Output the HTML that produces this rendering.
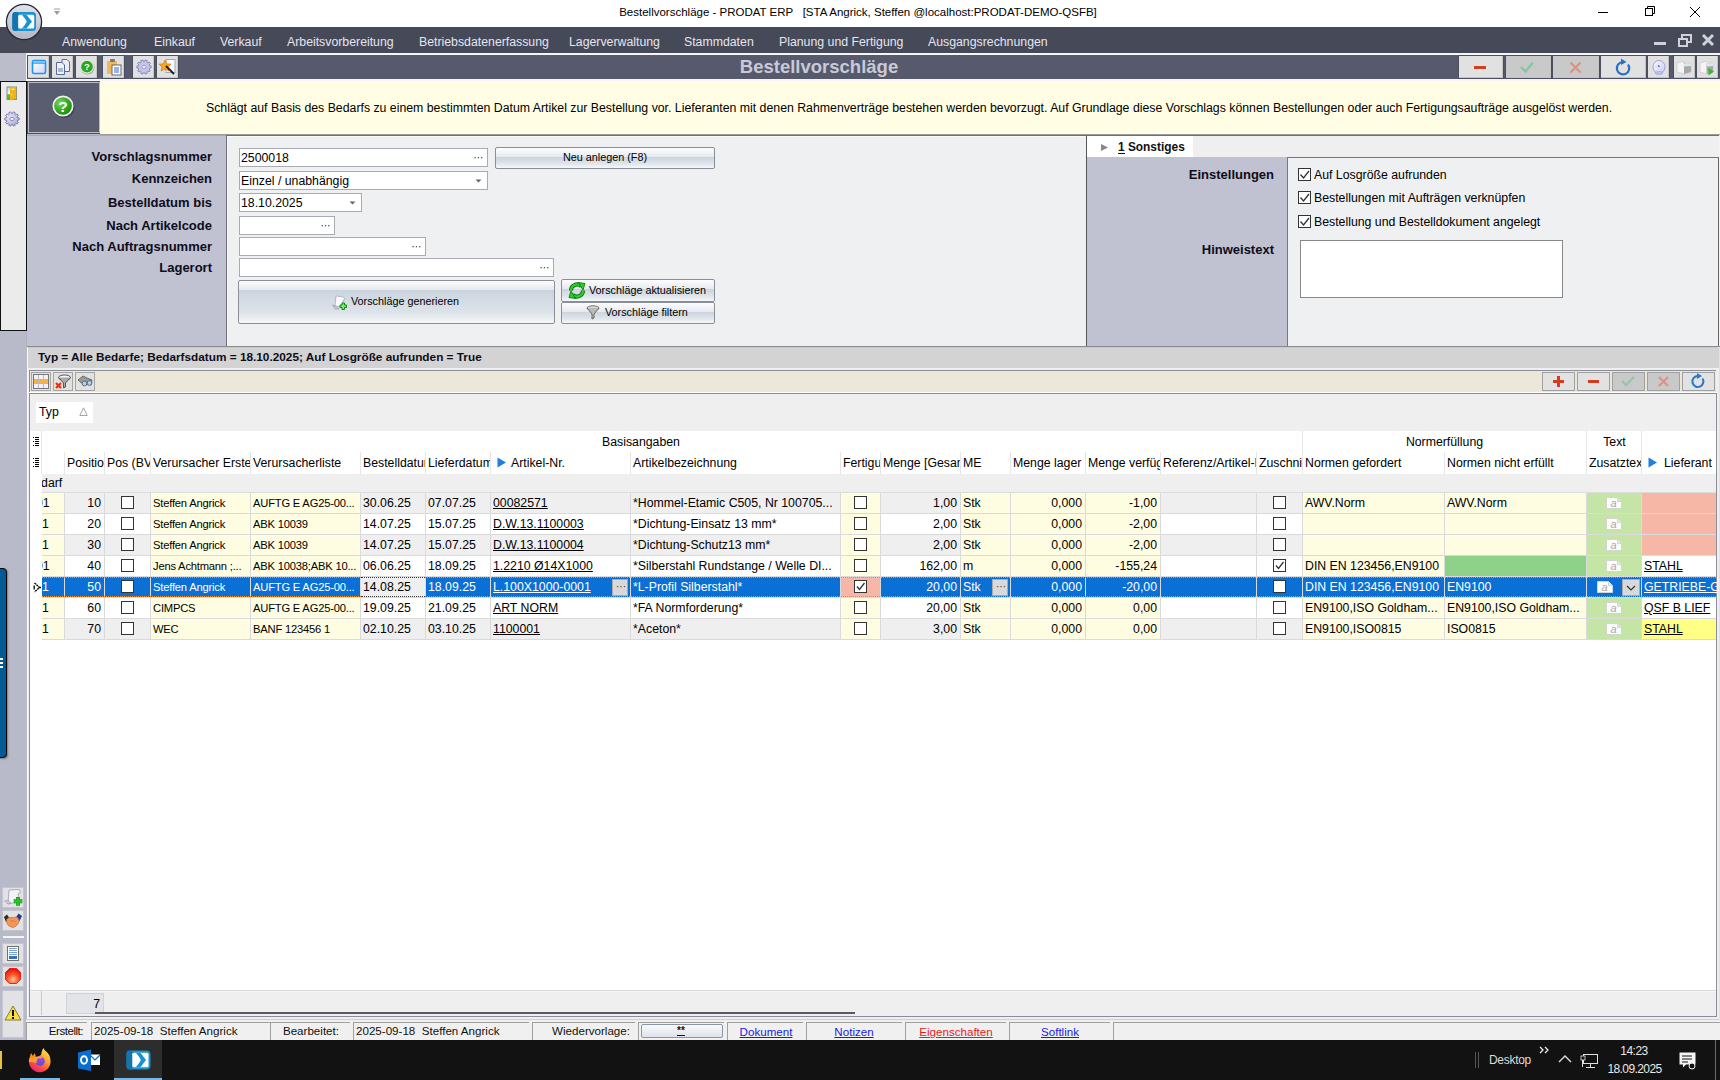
<!DOCTYPE html><html><head><meta charset="utf-8"><style>
*{margin:0;padding:0;box-sizing:border-box}
html,body{width:1720px;height:1080px;overflow:hidden}
body{position:relative;background:#b9bac9;font-family:"Liberation Sans",sans-serif;color:#000}
div{position:absolute}
.t{white-space:nowrap}
.u{text-decoration:underline}
.cb{width:13px;height:13px;background:#fff;border:1px solid #333}
.tb{background:#d9d9d9;border:1px solid #8d8f99}
</style></head><body><div style="left:0px;top:0px;width:1720px;height:27px;background:#fff"></div>
<div class="t" style="left:458px;top:6.77px;font-size:11.5px;line-height:11.5px;width:800px;text-align:center;color:#000;">Bestellvorschläge - PRODAT ERP &nbsp; [STA Angrick, Steffen @localhost:PRODAT-DEMO-QSFB]</div>
<svg style="position:absolute;left:1590px;top:4px" width="130" height="18" viewBox="0 0 130 18"><line x1="8" y1="8.5" x2="18" y2="8.5" stroke="#000" stroke-width="1"/><rect x="55.5" y="4.5" width="7" height="7" fill="none" stroke="#000"/><polyline points="57.5,4.5 57.5,2.5 64.5,2.5 64.5,9.5 62.5,9.5" fill="none" stroke="#000"/><line x1="100" y1="3" x2="110" y2="13" stroke="#000"/><line x1="110" y1="3" x2="100" y2="13" stroke="#000"/></svg>
<svg style="position:absolute;left:52px;top:7px" width="10" height="10" viewBox="0 0 10 10"><line x1="2" y1="2" x2="8" y2="2" stroke="#9a9ab0"/><polygon points="2,4 8,4 5,8" fill="#9a9ab0"/></svg>
<div style="left:0px;top:27px;width:1720px;height:26px;background:#464958"></div>
<div class="t" style="left:62px;top:35.89px;font-size:12.3px;line-height:12.3px;color:#e4e5ee;">Anwendung</div>
<div class="t" style="left:154px;top:35.89px;font-size:12.3px;line-height:12.3px;color:#e4e5ee;">Einkauf</div>
<div class="t" style="left:220px;top:35.89px;font-size:12.3px;line-height:12.3px;color:#e4e5ee;">Verkauf</div>
<div class="t" style="left:287px;top:35.89px;font-size:12.3px;line-height:12.3px;color:#e4e5ee;">Arbeitsvorbereitung</div>
<div class="t" style="left:419px;top:35.89px;font-size:12.3px;line-height:12.3px;color:#e4e5ee;">Betriebsdatenerfassung</div>
<div class="t" style="left:569px;top:35.89px;font-size:12.3px;line-height:12.3px;color:#e4e5ee;">Lagerverwaltung</div>
<div class="t" style="left:684px;top:35.89px;font-size:12.3px;line-height:12.3px;color:#e4e5ee;">Stammdaten</div>
<div class="t" style="left:779px;top:35.89px;font-size:12.3px;line-height:12.3px;color:#e4e5ee;">Planung und Fertigung</div>
<div class="t" style="left:928px;top:35.89px;font-size:12.3px;line-height:12.3px;color:#e4e5ee;">Ausgangsrechnungen</div>
<svg style="position:absolute;left:1648px;top:32px" width="72" height="18" viewBox="0 0 72 18"><rect x="6" y="10" width="12" height="3" fill="#d0d1db"/><rect x="31" y="7" width="8" height="7" fill="none" stroke="#d0d1db" stroke-width="2"/><polyline points="34,6 34,3 43,3 43,10 40,10" fill="none" stroke="#d0d1db" stroke-width="2"/><path d="M55 3 L65 13 M65 3 L55 13" stroke="#d0d1db" stroke-width="3"/></svg>
<svg style="position:absolute;left:0;top:0" width="50" height="45" viewBox="0 0 50 45"><defs><linearGradient id="lg" x1="0" y1="0" x2="0" y2="1"><stop offset="0" stop-color="#e2e3ea"/><stop offset="1" stop-color="#b4b5c4"/></linearGradient></defs><circle cx="24" cy="22" r="17.6" fill="url(#lg)" stroke="#262833" stroke-width="1.3"/><rect x="12.3" y="12" width="23.7" height="19" rx="3.5" fill="#1b93d0"/><rect x="12.3" y="12" width="6" height="19" rx="3" fill="#1474ad"/><rect x="18.2" y="14.7" width="16" height="13.8" rx="1.5" fill="#fff"/><path d="M21.8 14.7 L26.5 14.7 Q29.5 18.5 32 21.6 Q29.5 24.7 26.5 28.5 L21.8 28.5 Q25.5 24.7 26.8 21.6 Q25.5 18.5 21.8 14.7 Z" fill="#1b93d0"/></svg>
<div style="left:0px;top:53px;width:1720px;height:28px;background:#f6f6f8"></div>
<div style="left:0px;top:53px;width:26px;height:28px;background:#bcbdcb"></div>
<div style="left:27px;top:55px;width:1693px;height:24px;background:#575a6c"></div>
<div style="left:27px;top:55px;width:23px;height:24px;background:#e1e1e1;border:1px solid #4c4f60;box-shadow:inset -1px -1px 0 #c8c8c8"></div>
<div style="left:51px;top:55px;width:23px;height:24px;background:#e1e1e1;border:1px solid #4c4f60;box-shadow:inset -1px -1px 0 #c8c8c8"></div>
<div style="left:75px;top:55px;width:23px;height:24px;background:#e1e1e1;border:1px solid #4c4f60;box-shadow:inset -1px -1px 0 #c8c8c8"></div>
<div style="left:102px;top:55px;width:23px;height:24px;background:#e1e1e1;border:1px solid #4c4f60;box-shadow:inset -1px -1px 0 #c8c8c8"></div>
<div style="left:132px;top:55px;width:23px;height:24px;background:#e1e1e1;border:1px solid #4c4f60;box-shadow:inset -1px -1px 0 #c8c8c8"></div>
<div style="left:156px;top:55px;width:23px;height:24px;background:#e1e1e1;border:1px solid #4c4f60;box-shadow:inset -1px -1px 0 #c8c8c8"></div>
<div class="t" style="left:419px;top:57.84px;font-size:18.5px;line-height:18.5px;width:800px;text-align:center;font-weight:700;color:#c8cad8;">Bestellvorschläge</div>
<div style="left:1458px;top:55px;width:46px;height:24px;background:#e1e1e1;border:1px solid #4c4f60;box-shadow:inset -1px -1px 0 #c4c4c4"></div>
<div style="left:1505px;top:55px;width:47px;height:24px;background:#c9c9c9;border:1px solid #4c4f60;box-shadow:inset -1px -1px 0 #c4c4c4"></div>
<div style="left:1552px;top:55px;width:48px;height:24px;background:#c9c9c9;border:1px solid #4c4f60;box-shadow:inset -1px -1px 0 #c4c4c4"></div>
<div style="left:1600px;top:55px;width:47px;height:24px;background:#e1e1e1;border:1px solid #4c4f60;box-shadow:inset -1px -1px 0 #c4c4c4"></div>
<div style="left:1647px;top:55px;width:23px;height:24px;background:#e1e1e1;border:1px solid #4c4f60;box-shadow:inset -1px -1px 0 #c4c4c4"></div>
<div style="left:1673px;top:55px;width:23px;height:24px;background:#e1e1e1;border:1px solid #4c4f60;box-shadow:inset -1px -1px 0 #c4c4c4"></div>
<div style="left:1696px;top:55px;width:23px;height:24px;background:#e1e1e1;border:1px solid #4c4f60;box-shadow:inset -1px -1px 0 #c4c4c4"></div>
<div style="left:0px;top:81px;width:27px;height:250px;background:#ebebeb;border:1px solid #111"></div>
<div style="left:26px;top:331px;width:1px;height:16px;background:#b0b1c0"></div>
<div style="left:27px;top:81px;width:74px;height:53px;background:#5a5d6f;border:1px solid #4c4f60;box-shadow:inset 0 0 0 1px #b8bac8"></div>
<div style="left:100px;top:81px;width:1620px;height:54px;background:#fffde4;border-bottom:1px solid #9a9a9a"></div>
<div class="t" style="left:206px;top:101.59px;font-size:12.3px;line-height:12.3px;">Schlägt auf Basis des Bedarfs zu einem bestimmten Datum Artikel zur Bestellung vor. Lieferanten mit denen Rahmenverträge bestehen werden bevorzugt. Auf Grundlage diese Vorschlags können Bestellungen oder auch Fertigungsaufträge ausgelöst werden.</div>
<div style="left:27px;top:135px;width:200px;height:212px;background:#c0c1d1;box-shadow:inset 0 1px 0 #a8a9b8"></div>
<div style="left:226px;top:135px;width:861px;height:212px;background:#eff0f2;border-left:1px solid #6e6f78;border-top:1px solid #6e6f78;box-shadow:inset 1px 1px 0 #fafafa"></div>
<div class="t" style="left:-388px;top:150.00px;font-size:13px;line-height:13px;width:600px;text-align:right;font-weight:700;color:#0d0d1a;">Vorschlagsnummer</div>
<div class="t" style="left:-388px;top:172.00px;font-size:13px;line-height:13px;width:600px;text-align:right;font-weight:700;color:#0d0d1a;">Kennzeichen</div>
<div class="t" style="left:-388px;top:196.00px;font-size:13px;line-height:13px;width:600px;text-align:right;font-weight:700;color:#0d0d1a;">Bestelldatum bis</div>
<div class="t" style="left:-388px;top:219.00px;font-size:13px;line-height:13px;width:600px;text-align:right;font-weight:700;color:#0d0d1a;">Nach Artikelcode</div>
<div class="t" style="left:-388px;top:240.00px;font-size:13px;line-height:13px;width:600px;text-align:right;font-weight:700;color:#0d0d1a;">Nach Auftragsnummer</div>
<div class="t" style="left:-388px;top:261.00px;font-size:13px;line-height:13px;width:600px;text-align:right;font-weight:700;color:#0d0d1a;">Lagerort</div>
<div style="left:1086px;top:135px;width:634px;height:22px;background:#efefef;border-left:1px solid #555;border-top:1px solid #6e6f78"></div>
<div style="left:1087px;top:136px;width:106px;height:21px;background:#fff"></div>
<div style="left:1086px;top:157px;width:202px;height:190px;background:#c0c1d1;border-left:1px solid #555"></div>
<div style="left:1287px;top:157px;width:432px;height:190px;background:#eff0f2;border-left:1px solid #777;border-top:1px solid #777;border-right:1px solid #666"></div>
<div style="left:1719px;top:135px;width:1px;height:212px;background:#f4f4f4"></div>
<div style="left:27px;top:346px;width:1693px;height:1px;background:#8a8a92"></div>
<div style="left:239px;top:148px;width:249px;height:19px;background:#fff;border:1px solid #a9abb4"></div><div class="t" style="left:241px;top:151.69px;font-size:12.3px;line-height:12.3px;">2500018</div><svg style="position:absolute;left:474px;top:157px" width="10" height="2"><rect x="0.5" y="0" width="1.3" height="1.3" fill="#555"/><rect x="3.8" y="0" width="1.3" height="1.3" fill="#555"/><rect x="7.1" y="0" width="1.3" height="1.3" fill="#555"/></svg>
<div style="left:239px;top:171px;width:249px;height:19px;background:#fff;border:1px solid #a9abb4"></div><div class="t" style="left:241px;top:174.69px;font-size:12.3px;line-height:12.3px;">Einzel / unabhängig</div><svg style="position:absolute;left:475px;top:179px" width="8" height="5"><polygon points="0.5,0.5 6.5,0.5 3.5,3.5" fill="#666"/></svg>
<div style="left:239px;top:193px;width:123px;height:19px;background:#fff;border:1px solid #a9abb4"></div><div class="t" style="left:241px;top:196.69px;font-size:12.3px;line-height:12.3px;">18.10.2025</div><svg style="position:absolute;left:349px;top:201px" width="8" height="5"><polygon points="0.5,0.5 6.5,0.5 3.5,3.5" fill="#666"/></svg>
<div style="left:239px;top:216px;width:96px;height:19px;background:#fff;border:1px solid #a9abb4"></div><svg style="position:absolute;left:321px;top:225px" width="10" height="2"><rect x="0.5" y="0" width="1.3" height="1.3" fill="#555"/><rect x="3.8" y="0" width="1.3" height="1.3" fill="#555"/><rect x="7.1" y="0" width="1.3" height="1.3" fill="#555"/></svg>
<div style="left:239px;top:237px;width:187px;height:19px;background:#fff;border:1px solid #a9abb4"></div><svg style="position:absolute;left:412px;top:246px" width="10" height="2"><rect x="0.5" y="0" width="1.3" height="1.3" fill="#555"/><rect x="3.8" y="0" width="1.3" height="1.3" fill="#555"/><rect x="7.1" y="0" width="1.3" height="1.3" fill="#555"/></svg>
<div style="left:239px;top:258px;width:315px;height:19px;background:#fff;border:1px solid #a9abb4"></div><svg style="position:absolute;left:540px;top:267px" width="10" height="2"><rect x="0.5" y="0" width="1.3" height="1.3" fill="#555"/><rect x="3.8" y="0" width="1.3" height="1.3" fill="#555"/><rect x="7.1" y="0" width="1.3" height="1.3" fill="#555"/></svg>
<div style="left:495px;top:147px;width:220px;height:22px;background:linear-gradient(#fdfdfe 0px,#e6eaf0 8.5px,#cbd4de 9px,#dde3e9 75%,#f6f8fa 100%);border:1px solid #8a8e96;border-radius:2px"></div>
<div class="t" style="left:205px;top:152.36px;font-size:10.8px;line-height:10.8px;width:800px;text-align:center;">Neu anlegen (F8)</div>
<div style="left:238px;top:280px;width:317px;height:44px;background:linear-gradient(#fdfdfe 0px,#e6eaf0 8.5px,#cbd4de 9px,#dde3e9 75%,#f6f8fa 100%);border:1px solid #8a8e96;border-radius:2px"></div>
<div class="t" style="left:351px;top:295.86px;font-size:10.8px;line-height:10.8px;">Vorschläge generieren</div>
<div style="left:561px;top:279px;width:154px;height:23px;background:linear-gradient(#fdfdfe 0px,#e6eaf0 8.5px,#cbd4de 9px,#dde3e9 75%,#f6f8fa 100%);border:1px solid #8a8e96;border-radius:2px"></div>
<div class="t" style="left:589px;top:284.86px;font-size:10.8px;line-height:10.8px;">Vorschläge aktualisieren</div>
<div style="left:561px;top:302px;width:154px;height:22px;background:linear-gradient(#fdfdfe 0px,#e6eaf0 8.5px,#cbd4de 9px,#dde3e9 75%,#f6f8fa 100%);border:1px solid #8a8e96;border-radius:2px"></div>
<div class="t" style="left:605px;top:306.86px;font-size:10.8px;line-height:10.8px;">Vorschläge filtern</div>
<svg style="position:absolute;left:331px;top:294px" width="17" height="17" viewBox="0 0 17 17"><path d="M5 2 L11.5 2.8 Q13.5 3 13.5 5 Q13.5 6.5 12 6.5 L11 13 L4 12 Z" fill="#fafaff" stroke="#a0a0b8" stroke-width="0.7"/><path d="M1.5 11 L4 12 L8 15 L4 15 Z" fill="#d0d0e0" stroke="#9090a8" stroke-width="0.6"/><path d="M9 11 H11 V9 H13.5 V11 H15.5 V13.5 H13.5 V15.5 H11 V13.5 H9 Z" fill="#7ae868" stroke="#0a8a0a" stroke-width="1"/></svg>
<svg style="position:absolute;left:568px;top:282px" width="18" height="17" viewBox="0 0 18 17"><path d="M3 8.5 A6 6 0 0 1 13.5 4.5" fill="none" stroke="#0a6a0a" stroke-width="4"/><path d="M3 8.5 A6 6 0 0 1 13.5 4.5" fill="none" stroke="#2ad02a" stroke-width="2.2"/><polygon points="10.5,0.5 17,1.5 15,8" fill="#2ad02a" stroke="#0a6a0a" stroke-width="0.8"/><path d="M15 8.5 A6 6 0 0 1 4.5 12.5" fill="none" stroke="#0a6a0a" stroke-width="4"/><path d="M15 8.5 A6 6 0 0 1 4.5 12.5" fill="none" stroke="#2ad02a" stroke-width="2.2"/><polygon points="7.5,16.5 1,15.5 3,9" fill="#2ad02a" stroke="#0a6a0a" stroke-width="0.8"/></svg>
<svg style="position:absolute;left:586px;top:305px" width="14" height="15" viewBox="0 0 14 15"><ellipse cx="7" cy="3" rx="6" ry="2.2" fill="#d8d8d8" stroke="#777"/><path d="M1 3 L6 9 L6 14 L8 13 L8 9 L13 3" fill="#bbb" stroke="#666"/></svg>
<svg style="position:absolute;left:1101px;top:144px" width="8" height="8"><polygon points="0,0 7,3.5 0,7" fill="#888"/></svg>
<div class="t" style="left:1118px;top:141.93px;font-size:11.9px;line-height:11.9px;font-weight:700;color:#111;">1 Sonstiges</div>
<div style="left:1118px;top:153px;width:7px;height:1px;background:#111"></div>
<div class="t" style="left:674px;top:167.50px;font-size:13px;line-height:13px;width:600px;text-align:right;font-weight:700;color:#0d0d1a;">Einstellungen</div>
<div class="t" style="left:674px;top:243.00px;font-size:13px;line-height:13px;width:600px;text-align:right;font-weight:700;color:#0d0d1a;">Hinweistext</div>
<div class="cb" style="left:1298px;top:168px;width:13px;height:13px;"><svg width="11" height="11" style="position:absolute;left:0;top:0"><polyline points="1.5,5.5 4.5,9 10,2" fill="none" stroke="#333" stroke-width="1.3"/></svg></div>
<div class="t" style="left:1314px;top:168.59px;font-size:12.3px;line-height:12.3px;">Auf Losgröße aufrunden</div>
<div class="cb" style="left:1298px;top:191px;width:13px;height:13px;"><svg width="11" height="11" style="position:absolute;left:0;top:0"><polyline points="1.5,5.5 4.5,9 10,2" fill="none" stroke="#333" stroke-width="1.3"/></svg></div>
<div class="t" style="left:1314px;top:191.59px;font-size:12.3px;line-height:12.3px;">Bestellungen mit Aufträgen verknüpfen</div>
<div class="cb" style="left:1298px;top:215px;width:13px;height:13px;"><svg width="11" height="11" style="position:absolute;left:0;top:0"><polyline points="1.5,5.5 4.5,9 10,2" fill="none" stroke="#333" stroke-width="1.3"/></svg></div>
<div class="t" style="left:1314px;top:215.59px;font-size:12.3px;line-height:12.3px;">Bestellung und Bestelldokument angelegt</div>
<div style="left:1300px;top:240px;width:263px;height:58px;background:#fff;border:1px solid #888"></div>
<div style="left:27px;top:347px;width:1693px;height:673px;background:#efefef;border-left:1px solid #fafafa"></div>
<div style="left:27px;top:347px;width:1692px;height:21px;background:#d3d3d3;border-left:1px solid #fafafa;border-top:1px solid #c8c8c8;border-top-right-radius:3px"></div>
<div class="t" style="left:38px;top:352.01px;font-size:11.8px;line-height:11.8px;font-weight:700;color:#0d0d1a;">Typ = Alle Bedarfe; Bedarfsdatum = 18.10.2025; Auf Losgröße aufrunden = True</div>
<div style="left:29px;top:393px;width:1688px;height:624px;background:#fff;border:1px solid #8b8e98"></div>
<div style="left:30px;top:394px;width:1686px;height:37px;background:#efefef"></div>
<div style="left:30px;top:431px;width:1686px;height:43px;background:#fff"></div>
<div style="left:64px;top:452px;width:1px;height:22px;background:#e6e6e6"></div>
<div style="left:104px;top:452px;width:1px;height:22px;background:#e6e6e6"></div>
<div style="left:150px;top:452px;width:1px;height:22px;background:#e6e6e6"></div>
<div style="left:250px;top:452px;width:1px;height:22px;background:#e6e6e6"></div>
<div style="left:360px;top:452px;width:1px;height:22px;background:#e6e6e6"></div>
<div style="left:425px;top:452px;width:1px;height:22px;background:#e6e6e6"></div>
<div style="left:490px;top:452px;width:1px;height:22px;background:#e6e6e6"></div>
<div style="left:630px;top:452px;width:1px;height:22px;background:#e6e6e6"></div>
<div style="left:840px;top:452px;width:1px;height:22px;background:#e6e6e6"></div>
<div style="left:880px;top:452px;width:1px;height:22px;background:#e6e6e6"></div>
<div style="left:960px;top:452px;width:1px;height:22px;background:#e6e6e6"></div>
<div style="left:1010px;top:452px;width:1px;height:22px;background:#e6e6e6"></div>
<div style="left:1085px;top:452px;width:1px;height:22px;background:#e6e6e6"></div>
<div style="left:1160px;top:452px;width:1px;height:22px;background:#e6e6e6"></div>
<div style="left:1256px;top:452px;width:1px;height:22px;background:#e6e6e6"></div>
<div style="left:1302px;top:452px;width:1px;height:22px;background:#e6e6e6"></div>
<div style="left:1444px;top:452px;width:1px;height:22px;background:#e6e6e6"></div>
<div style="left:1586px;top:452px;width:1px;height:22px;background:#e6e6e6"></div>
<div style="left:1641px;top:452px;width:1px;height:22px;background:#e6e6e6"></div>
<div style="left:1302px;top:431px;width:1px;height:21px;background:#e6e6e6"></div>
<div style="left:1586px;top:431px;width:1px;height:21px;background:#e6e6e6"></div>
<div style="left:1641px;top:431px;width:1px;height:21px;background:#e6e6e6"></div>
<div class="t" style="left:241px;top:435.79px;font-size:12.3px;line-height:12.3px;width:800px;text-align:center;">Basisangaben</div>
<div class="t" style="left:1044.5px;top:435.79px;font-size:12.3px;line-height:12.3px;width:800px;text-align:center;">Normerfüllung</div>
<div class="t" style="left:1214.5px;top:435.79px;font-size:12.3px;line-height:12.3px;width:800px;text-align:center;">Text</div>
<div style="left:65px;top:452px;width:39px;height:22px;overflow:hidden"><div class="t" style="left:2px;top:4.99px;font-size:12.3px;line-height:12.3px;">Positio</div></div>
<div style="left:105px;top:452px;width:45px;height:22px;overflow:hidden"><div class="t" style="left:2px;top:4.99px;font-size:12.3px;line-height:12.3px;">Pos (BV</div></div>
<div style="left:151px;top:452px;width:99px;height:22px;overflow:hidden"><div class="t" style="left:2px;top:4.99px;font-size:12.3px;line-height:12.3px;">Verursacher Erste</div></div>
<div style="left:251px;top:452px;width:109px;height:22px;overflow:hidden"><div class="t" style="left:2px;top:4.99px;font-size:12.3px;line-height:12.3px;">Verursacherliste</div></div>
<div style="left:361px;top:452px;width:64px;height:22px;overflow:hidden"><div class="t" style="left:2px;top:4.99px;font-size:12.3px;line-height:12.3px;">Bestelldatum</div></div>
<div style="left:426px;top:452px;width:64px;height:22px;overflow:hidden"><div class="t" style="left:2px;top:4.99px;font-size:12.3px;line-height:12.3px;">Lieferdatum</div></div>
<div style="left:491px;top:452px;width:139px;height:22px;overflow:hidden"><div class="t" style="left:20px;top:4.99px;font-size:12.3px;line-height:12.3px;">Artikel-Nr.</div></div>
<div style="left:631px;top:452px;width:209px;height:22px;overflow:hidden"><div class="t" style="left:2px;top:4.99px;font-size:12.3px;line-height:12.3px;">Artikelbezeichnung</div></div>
<div style="left:841px;top:452px;width:39px;height:22px;overflow:hidden"><div class="t" style="left:2px;top:4.99px;font-size:12.3px;line-height:12.3px;">Fertigung</div></div>
<div style="left:881px;top:452px;width:79px;height:22px;overflow:hidden"><div class="t" style="left:2px;top:4.99px;font-size:12.3px;line-height:12.3px;">Menge [Gesamt]</div></div>
<div style="left:961px;top:452px;width:49px;height:22px;overflow:hidden"><div class="t" style="left:2px;top:4.99px;font-size:12.3px;line-height:12.3px;">ME</div></div>
<div style="left:1011px;top:452px;width:74px;height:22px;overflow:hidden"><div class="t" style="left:2px;top:4.99px;font-size:12.3px;line-height:12.3px;">Menge lager</div></div>
<div style="left:1086px;top:452px;width:74px;height:22px;overflow:hidden"><div class="t" style="left:2px;top:4.99px;font-size:12.3px;line-height:12.3px;">Menge verfügbar</div></div>
<div style="left:1161px;top:452px;width:95px;height:22px;overflow:hidden"><div class="t" style="left:2px;top:4.99px;font-size:12.3px;line-height:12.3px;">Referenz/Artikel-Nr</div></div>
<div style="left:1257px;top:452px;width:45px;height:22px;overflow:hidden"><div class="t" style="left:2px;top:4.99px;font-size:12.3px;line-height:12.3px;">Zuschnitt</div></div>
<div style="left:1303px;top:452px;width:141px;height:22px;overflow:hidden"><div class="t" style="left:2px;top:4.99px;font-size:12.3px;line-height:12.3px;">Normen gefordert</div></div>
<div style="left:1445px;top:452px;width:141px;height:22px;overflow:hidden"><div class="t" style="left:2px;top:4.99px;font-size:12.3px;line-height:12.3px;">Normen nicht erfüllt</div></div>
<div style="left:1587px;top:452px;width:54px;height:22px;overflow:hidden"><div class="t" style="left:2px;top:4.99px;font-size:12.3px;line-height:12.3px;">Zusatztext</div></div>
<div style="left:1642px;top:452px;width:74px;height:22px;overflow:hidden"><div class="t" style="left:22px;top:4.99px;font-size:12.3px;line-height:12.3px;">Lieferant</div></div>
<svg style="position:absolute;left:497px;top:457px" width="10" height="11"><polygon points="0.5,0.5 9,5.5 0.5,10.5" fill="#1e7fe0"/></svg>
<svg style="position:absolute;left:1648px;top:457px" width="10" height="11"><polygon points="0.5,0.5 9,5.5 0.5,10.5" fill="#1e7fe0"/></svg>
<svg style="position:absolute;left:33px;top:437px" width="7" height="10" viewBox="0 0 7 10"><g fill="#000"><rect x="0" y="0" width="1" height="1"/><rect x="2" y="0" width="4" height="1"/><rect x="2" y="2" width="4" height="1"/><rect x="0" y="4" width="1" height="1"/><rect x="2" y="4" width="4" height="1"/><rect x="2" y="6" width="4" height="1"/><rect x="0" y="8" width="1" height="1"/><rect x="2" y="8" width="4" height="1"/></g></svg>
<svg style="position:absolute;left:33px;top:458px" width="7" height="10" viewBox="0 0 7 10"><g fill="#000"><rect x="0" y="0" width="1" height="1"/><rect x="2" y="0" width="4" height="1"/><rect x="2" y="2" width="4" height="1"/><rect x="0" y="4" width="1" height="1"/><rect x="2" y="4" width="4" height="1"/><rect x="2" y="6" width="4" height="1"/><rect x="0" y="8" width="1" height="1"/><rect x="2" y="8" width="4" height="1"/></g></svg>
<div style="left:41px;top:431px;width:1px;height:43px;background:#e8e8e8"></div>
<div style="left:42px;top:474px;width:1674px;height:19px;background:#efefef;border-bottom:1px solid #dcdcdc"></div>
<div style="left:42px;top:474px;width:60px;height:18px;overflow:hidden"><div class="t" style="left:-16px;top:2.99px;font-size:12.3px;line-height:12.3px;">Bedarf</div></div>
<div style="left:42px;top:493px;width:23px;height:21px;background:#fffde1;border-right:1px solid #dadada;border-bottom:1px solid #dadada"></div>
<div style="left:42px;top:493px;width:23px;height:21px;overflow:hidden"><div class="t" style="left:-6px;top:3.79px;font-size:12.3px;line-height:12.3px;color:#000;">01</div></div>
<div style="left:65px;top:493px;width:40px;height:21px;background:#efefef;border-right:1px solid #dadada;border-bottom:1px solid #dadada"></div>
<div style="left:65px;top:493px;width:40px;height:21px;overflow:hidden"><div class="t" style="left:0px;top:3.79px;font-size:12.3px;line-height:12.3px;width:36px;text-align:right;color:#000;">10</div></div>
<div style="left:105px;top:493px;width:46px;height:21px;background:#efefef;border-right:1px solid #dadada;border-bottom:1px solid #dadada"></div>
<div class="cb" style="left:121px;top:496px;width:13px;height:13px;"></div>
<div style="left:151px;top:493px;width:100px;height:21px;background:#fffde1;border-right:1px solid #dadada;border-bottom:1px solid #dadada"></div>
<div style="left:151px;top:493px;width:100px;height:21px;overflow:hidden"><div class="t" style="left:2px;top:4.72px;font-size:11.2px;line-height:11.2px;color:#000;letter-spacing:-0.2px;">Steffen Angrick</div></div>
<div style="left:251px;top:493px;width:110px;height:21px;background:#fffde1;border-right:1px solid #dadada;border-bottom:1px solid #dadada"></div>
<div style="left:251px;top:493px;width:110px;height:21px;overflow:hidden"><div class="t" style="left:2px;top:4.72px;font-size:11.2px;line-height:11.2px;color:#000;letter-spacing:-0.2px;">AUFTG E AG25-00...</div></div>
<div style="left:361px;top:493px;width:65px;height:21px;background:#efefef;border-right:1px solid #dadada;border-bottom:1px solid #dadada"></div>
<div style="left:361px;top:493px;width:65px;height:21px;overflow:hidden"><div class="t" style="left:2px;top:3.79px;font-size:12.3px;line-height:12.3px;color:#000;">30.06.25</div></div>
<div style="left:426px;top:493px;width:65px;height:21px;background:#efefef;border-right:1px solid #dadada;border-bottom:1px solid #dadada"></div>
<div style="left:426px;top:493px;width:65px;height:21px;overflow:hidden"><div class="t" style="left:2px;top:3.79px;font-size:12.3px;line-height:12.3px;color:#000;">07.07.25</div></div>
<div style="left:491px;top:493px;width:140px;height:21px;background:#efefef;border-right:1px solid #dadada;border-bottom:1px solid #dadada"></div>
<div style="left:491px;top:493px;width:140px;height:21px;overflow:hidden"><div class="t" style="left:2px;top:3.79px;font-size:12.3px;line-height:12.3px;color:#000;text-decoration:underline;">00082571</div></div>
<div style="left:631px;top:493px;width:210px;height:21px;background:#efefef;border-right:1px solid #dadada;border-bottom:1px solid #dadada"></div>
<div style="left:631px;top:493px;width:210px;height:21px;overflow:hidden"><div class="t" style="left:2px;top:3.79px;font-size:12.3px;line-height:12.3px;color:#000;">*Hommel-Etamic C505, Nr 100705...</div></div>
<div style="left:841px;top:493px;width:40px;height:21px;background:#fffde1;border-right:1px solid #dadada;border-bottom:1px solid #dadada"></div>
<div class="cb" style="left:854px;top:496px;width:13px;height:13px;"></div>
<div style="left:881px;top:493px;width:80px;height:21px;background:#efefef;border-right:1px solid #dadada;border-bottom:1px solid #dadada"></div>
<div style="left:881px;top:493px;width:80px;height:21px;overflow:hidden"><div class="t" style="left:0px;top:3.79px;font-size:12.3px;line-height:12.3px;width:76px;text-align:right;color:#000;">1,00</div></div>
<div style="left:961px;top:493px;width:50px;height:21px;background:#fffde1;border-right:1px solid #dadada;border-bottom:1px solid #dadada"></div>
<div style="left:961px;top:493px;width:50px;height:21px;overflow:hidden"><div class="t" style="left:2px;top:3.79px;font-size:12.3px;line-height:12.3px;color:#000;">Stk</div></div>
<div style="left:1011px;top:493px;width:75px;height:21px;background:#fffde1;border-right:1px solid #dadada;border-bottom:1px solid #dadada"></div>
<div style="left:1011px;top:493px;width:75px;height:21px;overflow:hidden"><div class="t" style="left:0px;top:3.79px;font-size:12.3px;line-height:12.3px;width:71px;text-align:right;color:#000;">0,000</div></div>
<div style="left:1086px;top:493px;width:75px;height:21px;background:#fffde1;border-right:1px solid #dadada;border-bottom:1px solid #dadada"></div>
<div style="left:1086px;top:493px;width:75px;height:21px;overflow:hidden"><div class="t" style="left:0px;top:3.79px;font-size:12.3px;line-height:12.3px;width:71px;text-align:right;color:#000;">-1,00</div></div>
<div style="left:1161px;top:493px;width:96px;height:21px;background:#efefef;border-right:1px solid #dadada;border-bottom:1px solid #dadada"></div>
<div style="left:1257px;top:493px;width:46px;height:21px;background:#efefef;border-right:1px solid #dadada;border-bottom:1px solid #dadada"></div>
<div class="cb" style="left:1273px;top:496px;width:13px;height:13px;"></div>
<div style="left:1303px;top:493px;width:142px;height:21px;background:#fffde1;border-right:1px solid #dadada;border-bottom:1px solid #dadada"></div>
<div style="left:1303px;top:493px;width:142px;height:21px;overflow:hidden"><div class="t" style="left:2px;top:3.79px;font-size:12.3px;line-height:12.3px;color:#000;">AWV.Norm</div></div>
<div style="left:1445px;top:493px;width:142px;height:21px;background:#fffde1;border-right:1px solid #dadada;border-bottom:1px solid #dadada"></div>
<div style="left:1445px;top:493px;width:142px;height:21px;overflow:hidden"><div class="t" style="left:2px;top:3.79px;font-size:12.3px;line-height:12.3px;color:#000;">AWV.Norm</div></div>
<div style="left:1587px;top:493px;width:55px;height:21px;background:#c4e5a6;border-right:1px solid #dadada;border-bottom:1px solid #dadada"></div>
<svg style="position:absolute;left:1606px;top:497px" width="16" height="12" viewBox="0 0 16 12"><path d="M0.5 0.5 H11.5 L15.5 4.5 V11.5 H0.5 Z" fill="#fdfdfd" stroke="#d4d4d4"/><path d="M11.5 0.5 V4.5 H15.5" fill="#e8e8e8" stroke="#d4d4d4"/><text x="7.5" y="9.6" font-size="11" font-style="italic" fill="#a8a8a8" text-anchor="middle" font-family="Liberation Sans">a</text></svg>
<div style="left:1642px;top:493px;width:74px;height:21px;background:#f6b7a7;border-bottom:1px solid #dadada"></div>
<div style="left:42px;top:514px;width:23px;height:21px;background:#fffde1;border-right:1px solid #dadada;border-bottom:1px solid #dadada"></div>
<div style="left:42px;top:514px;width:23px;height:21px;overflow:hidden"><div class="t" style="left:0px;top:3.79px;font-size:12.3px;line-height:12.3px;color:#000;">1</div></div>
<div style="left:65px;top:514px;width:40px;height:21px;background:#ffffff;border-right:1px solid #dadada;border-bottom:1px solid #dadada"></div>
<div style="left:65px;top:514px;width:40px;height:21px;overflow:hidden"><div class="t" style="left:0px;top:3.79px;font-size:12.3px;line-height:12.3px;width:36px;text-align:right;color:#000;">20</div></div>
<div style="left:105px;top:514px;width:46px;height:21px;background:#ffffff;border-right:1px solid #dadada;border-bottom:1px solid #dadada"></div>
<div class="cb" style="left:121px;top:517px;width:13px;height:13px;"></div>
<div style="left:151px;top:514px;width:100px;height:21px;background:#fffde1;border-right:1px solid #dadada;border-bottom:1px solid #dadada"></div>
<div style="left:151px;top:514px;width:100px;height:21px;overflow:hidden"><div class="t" style="left:2px;top:4.72px;font-size:11.2px;line-height:11.2px;color:#000;letter-spacing:-0.2px;">Steffen Angrick</div></div>
<div style="left:251px;top:514px;width:110px;height:21px;background:#fffde1;border-right:1px solid #dadada;border-bottom:1px solid #dadada"></div>
<div style="left:251px;top:514px;width:110px;height:21px;overflow:hidden"><div class="t" style="left:2px;top:4.72px;font-size:11.2px;line-height:11.2px;color:#000;letter-spacing:-0.2px;">ABK 10039</div></div>
<div style="left:361px;top:514px;width:65px;height:21px;background:#ffffff;border-right:1px solid #dadada;border-bottom:1px solid #dadada"></div>
<div style="left:361px;top:514px;width:65px;height:21px;overflow:hidden"><div class="t" style="left:2px;top:3.79px;font-size:12.3px;line-height:12.3px;color:#000;">14.07.25</div></div>
<div style="left:426px;top:514px;width:65px;height:21px;background:#ffffff;border-right:1px solid #dadada;border-bottom:1px solid #dadada"></div>
<div style="left:426px;top:514px;width:65px;height:21px;overflow:hidden"><div class="t" style="left:2px;top:3.79px;font-size:12.3px;line-height:12.3px;color:#000;">15.07.25</div></div>
<div style="left:491px;top:514px;width:140px;height:21px;background:#ffffff;border-right:1px solid #dadada;border-bottom:1px solid #dadada"></div>
<div style="left:491px;top:514px;width:140px;height:21px;overflow:hidden"><div class="t" style="left:2px;top:3.79px;font-size:12.3px;line-height:12.3px;color:#000;text-decoration:underline;">D.W.13.1100003</div></div>
<div style="left:631px;top:514px;width:210px;height:21px;background:#ffffff;border-right:1px solid #dadada;border-bottom:1px solid #dadada"></div>
<div style="left:631px;top:514px;width:210px;height:21px;overflow:hidden"><div class="t" style="left:2px;top:3.79px;font-size:12.3px;line-height:12.3px;color:#000;">*Dichtung-Einsatz 13 mm*</div></div>
<div style="left:841px;top:514px;width:40px;height:21px;background:#fffde1;border-right:1px solid #dadada;border-bottom:1px solid #dadada"></div>
<div class="cb" style="left:854px;top:517px;width:13px;height:13px;"></div>
<div style="left:881px;top:514px;width:80px;height:21px;background:#ffffff;border-right:1px solid #dadada;border-bottom:1px solid #dadada"></div>
<div style="left:881px;top:514px;width:80px;height:21px;overflow:hidden"><div class="t" style="left:0px;top:3.79px;font-size:12.3px;line-height:12.3px;width:76px;text-align:right;color:#000;">2,00</div></div>
<div style="left:961px;top:514px;width:50px;height:21px;background:#fffde1;border-right:1px solid #dadada;border-bottom:1px solid #dadada"></div>
<div style="left:961px;top:514px;width:50px;height:21px;overflow:hidden"><div class="t" style="left:2px;top:3.79px;font-size:12.3px;line-height:12.3px;color:#000;">Stk</div></div>
<div style="left:1011px;top:514px;width:75px;height:21px;background:#fffde1;border-right:1px solid #dadada;border-bottom:1px solid #dadada"></div>
<div style="left:1011px;top:514px;width:75px;height:21px;overflow:hidden"><div class="t" style="left:0px;top:3.79px;font-size:12.3px;line-height:12.3px;width:71px;text-align:right;color:#000;">0,000</div></div>
<div style="left:1086px;top:514px;width:75px;height:21px;background:#fffde1;border-right:1px solid #dadada;border-bottom:1px solid #dadada"></div>
<div style="left:1086px;top:514px;width:75px;height:21px;overflow:hidden"><div class="t" style="left:0px;top:3.79px;font-size:12.3px;line-height:12.3px;width:71px;text-align:right;color:#000;">-2,00</div></div>
<div style="left:1161px;top:514px;width:96px;height:21px;background:#ffffff;border-right:1px solid #dadada;border-bottom:1px solid #dadada"></div>
<div style="left:1257px;top:514px;width:46px;height:21px;background:#ffffff;border-right:1px solid #dadada;border-bottom:1px solid #dadada"></div>
<div class="cb" style="left:1273px;top:517px;width:13px;height:13px;"></div>
<div style="left:1303px;top:514px;width:142px;height:21px;background:#fffde1;border-right:1px solid #dadada;border-bottom:1px solid #dadada"></div>
<div style="left:1445px;top:514px;width:142px;height:21px;background:#fffde1;border-right:1px solid #dadada;border-bottom:1px solid #dadada"></div>
<div style="left:1587px;top:514px;width:55px;height:21px;background:#c4e5a6;border-right:1px solid #dadada;border-bottom:1px solid #dadada"></div>
<svg style="position:absolute;left:1606px;top:518px" width="16" height="12" viewBox="0 0 16 12"><path d="M0.5 0.5 H11.5 L15.5 4.5 V11.5 H0.5 Z" fill="#fdfdfd" stroke="#d4d4d4"/><path d="M11.5 0.5 V4.5 H15.5" fill="#e8e8e8" stroke="#d4d4d4"/><text x="7.5" y="9.6" font-size="11" font-style="italic" fill="#a8a8a8" text-anchor="middle" font-family="Liberation Sans">a</text></svg>
<div style="left:1642px;top:514px;width:74px;height:21px;background:#f6b7a7;border-bottom:1px solid #dadada"></div>
<div style="left:42px;top:535px;width:23px;height:21px;background:#fffde1;border-right:1px solid #dadada;border-bottom:1px solid #dadada"></div>
<div style="left:42px;top:535px;width:23px;height:21px;overflow:hidden"><div class="t" style="left:0px;top:3.79px;font-size:12.3px;line-height:12.3px;color:#000;">1</div></div>
<div style="left:65px;top:535px;width:40px;height:21px;background:#efefef;border-right:1px solid #dadada;border-bottom:1px solid #dadada"></div>
<div style="left:65px;top:535px;width:40px;height:21px;overflow:hidden"><div class="t" style="left:0px;top:3.79px;font-size:12.3px;line-height:12.3px;width:36px;text-align:right;color:#000;">30</div></div>
<div style="left:105px;top:535px;width:46px;height:21px;background:#efefef;border-right:1px solid #dadada;border-bottom:1px solid #dadada"></div>
<div class="cb" style="left:121px;top:538px;width:13px;height:13px;"></div>
<div style="left:151px;top:535px;width:100px;height:21px;background:#fffde1;border-right:1px solid #dadada;border-bottom:1px solid #dadada"></div>
<div style="left:151px;top:535px;width:100px;height:21px;overflow:hidden"><div class="t" style="left:2px;top:4.72px;font-size:11.2px;line-height:11.2px;color:#000;letter-spacing:-0.2px;">Steffen Angrick</div></div>
<div style="left:251px;top:535px;width:110px;height:21px;background:#fffde1;border-right:1px solid #dadada;border-bottom:1px solid #dadada"></div>
<div style="left:251px;top:535px;width:110px;height:21px;overflow:hidden"><div class="t" style="left:2px;top:4.72px;font-size:11.2px;line-height:11.2px;color:#000;letter-spacing:-0.2px;">ABK 10039</div></div>
<div style="left:361px;top:535px;width:65px;height:21px;background:#efefef;border-right:1px solid #dadada;border-bottom:1px solid #dadada"></div>
<div style="left:361px;top:535px;width:65px;height:21px;overflow:hidden"><div class="t" style="left:2px;top:3.79px;font-size:12.3px;line-height:12.3px;color:#000;">14.07.25</div></div>
<div style="left:426px;top:535px;width:65px;height:21px;background:#efefef;border-right:1px solid #dadada;border-bottom:1px solid #dadada"></div>
<div style="left:426px;top:535px;width:65px;height:21px;overflow:hidden"><div class="t" style="left:2px;top:3.79px;font-size:12.3px;line-height:12.3px;color:#000;">15.07.25</div></div>
<div style="left:491px;top:535px;width:140px;height:21px;background:#efefef;border-right:1px solid #dadada;border-bottom:1px solid #dadada"></div>
<div style="left:491px;top:535px;width:140px;height:21px;overflow:hidden"><div class="t" style="left:2px;top:3.79px;font-size:12.3px;line-height:12.3px;color:#000;text-decoration:underline;">D.W.13.1100004</div></div>
<div style="left:631px;top:535px;width:210px;height:21px;background:#efefef;border-right:1px solid #dadada;border-bottom:1px solid #dadada"></div>
<div style="left:631px;top:535px;width:210px;height:21px;overflow:hidden"><div class="t" style="left:2px;top:3.79px;font-size:12.3px;line-height:12.3px;color:#000;">*Dichtung-Schutz13 mm*</div></div>
<div style="left:841px;top:535px;width:40px;height:21px;background:#fffde1;border-right:1px solid #dadada;border-bottom:1px solid #dadada"></div>
<div class="cb" style="left:854px;top:538px;width:13px;height:13px;"></div>
<div style="left:881px;top:535px;width:80px;height:21px;background:#efefef;border-right:1px solid #dadada;border-bottom:1px solid #dadada"></div>
<div style="left:881px;top:535px;width:80px;height:21px;overflow:hidden"><div class="t" style="left:0px;top:3.79px;font-size:12.3px;line-height:12.3px;width:76px;text-align:right;color:#000;">2,00</div></div>
<div style="left:961px;top:535px;width:50px;height:21px;background:#fffde1;border-right:1px solid #dadada;border-bottom:1px solid #dadada"></div>
<div style="left:961px;top:535px;width:50px;height:21px;overflow:hidden"><div class="t" style="left:2px;top:3.79px;font-size:12.3px;line-height:12.3px;color:#000;">Stk</div></div>
<div style="left:1011px;top:535px;width:75px;height:21px;background:#fffde1;border-right:1px solid #dadada;border-bottom:1px solid #dadada"></div>
<div style="left:1011px;top:535px;width:75px;height:21px;overflow:hidden"><div class="t" style="left:0px;top:3.79px;font-size:12.3px;line-height:12.3px;width:71px;text-align:right;color:#000;">0,000</div></div>
<div style="left:1086px;top:535px;width:75px;height:21px;background:#fffde1;border-right:1px solid #dadada;border-bottom:1px solid #dadada"></div>
<div style="left:1086px;top:535px;width:75px;height:21px;overflow:hidden"><div class="t" style="left:0px;top:3.79px;font-size:12.3px;line-height:12.3px;width:71px;text-align:right;color:#000;">-2,00</div></div>
<div style="left:1161px;top:535px;width:96px;height:21px;background:#efefef;border-right:1px solid #dadada;border-bottom:1px solid #dadada"></div>
<div style="left:1257px;top:535px;width:46px;height:21px;background:#efefef;border-right:1px solid #dadada;border-bottom:1px solid #dadada"></div>
<div class="cb" style="left:1273px;top:538px;width:13px;height:13px;"></div>
<div style="left:1303px;top:535px;width:142px;height:21px;background:#fffde1;border-right:1px solid #dadada;border-bottom:1px solid #dadada"></div>
<div style="left:1445px;top:535px;width:142px;height:21px;background:#fffde1;border-right:1px solid #dadada;border-bottom:1px solid #dadada"></div>
<div style="left:1587px;top:535px;width:55px;height:21px;background:#c4e5a6;border-right:1px solid #dadada;border-bottom:1px solid #dadada"></div>
<svg style="position:absolute;left:1606px;top:539px" width="16" height="12" viewBox="0 0 16 12"><path d="M0.5 0.5 H11.5 L15.5 4.5 V11.5 H0.5 Z" fill="#fdfdfd" stroke="#d4d4d4"/><path d="M11.5 0.5 V4.5 H15.5" fill="#e8e8e8" stroke="#d4d4d4"/><text x="7.5" y="9.6" font-size="11" font-style="italic" fill="#a8a8a8" text-anchor="middle" font-family="Liberation Sans">a</text></svg>
<div style="left:1642px;top:535px;width:74px;height:21px;background:#f6b7a7;border-bottom:1px solid #dadada"></div>
<div style="left:42px;top:556px;width:23px;height:21px;background:#fffde1;border-right:1px solid #dadada;border-bottom:1px solid #dadada"></div>
<div style="left:42px;top:556px;width:23px;height:21px;overflow:hidden"><div class="t" style="left:-6px;top:3.79px;font-size:12.3px;line-height:12.3px;color:#000;">01</div></div>
<div style="left:65px;top:556px;width:40px;height:21px;background:#ffffff;border-right:1px solid #dadada;border-bottom:1px solid #dadada"></div>
<div style="left:65px;top:556px;width:40px;height:21px;overflow:hidden"><div class="t" style="left:0px;top:3.79px;font-size:12.3px;line-height:12.3px;width:36px;text-align:right;color:#000;">40</div></div>
<div style="left:105px;top:556px;width:46px;height:21px;background:#ffffff;border-right:1px solid #dadada;border-bottom:1px solid #dadada"></div>
<div class="cb" style="left:121px;top:559px;width:13px;height:13px;"></div>
<div style="left:151px;top:556px;width:100px;height:21px;background:#fffde1;border-right:1px solid #dadada;border-bottom:1px solid #dadada"></div>
<div style="left:151px;top:556px;width:100px;height:21px;overflow:hidden"><div class="t" style="left:2px;top:4.72px;font-size:11.2px;line-height:11.2px;color:#000;letter-spacing:-0.2px;">Jens Achtmann ;...</div></div>
<div style="left:251px;top:556px;width:110px;height:21px;background:#fffde1;border-right:1px solid #dadada;border-bottom:1px solid #dadada"></div>
<div style="left:251px;top:556px;width:110px;height:21px;overflow:hidden"><div class="t" style="left:2px;top:4.72px;font-size:11.2px;line-height:11.2px;color:#000;letter-spacing:-0.2px;">ABK 10038;ABK 10...</div></div>
<div style="left:361px;top:556px;width:65px;height:21px;background:#ffffff;border-right:1px solid #dadada;border-bottom:1px solid #dadada"></div>
<div style="left:361px;top:556px;width:65px;height:21px;overflow:hidden"><div class="t" style="left:2px;top:3.79px;font-size:12.3px;line-height:12.3px;color:#000;">06.06.25</div></div>
<div style="left:426px;top:556px;width:65px;height:21px;background:#ffffff;border-right:1px solid #dadada;border-bottom:1px solid #dadada"></div>
<div style="left:426px;top:556px;width:65px;height:21px;overflow:hidden"><div class="t" style="left:2px;top:3.79px;font-size:12.3px;line-height:12.3px;color:#000;">18.09.25</div></div>
<div style="left:491px;top:556px;width:140px;height:21px;background:#ffffff;border-right:1px solid #dadada;border-bottom:1px solid #dadada"></div>
<div style="left:491px;top:556px;width:140px;height:21px;overflow:hidden"><div class="t" style="left:2px;top:3.79px;font-size:12.3px;line-height:12.3px;color:#000;text-decoration:underline;">1.2210 Ø14X1000</div></div>
<div style="left:631px;top:556px;width:210px;height:21px;background:#ffffff;border-right:1px solid #dadada;border-bottom:1px solid #dadada"></div>
<div style="left:631px;top:556px;width:210px;height:21px;overflow:hidden"><div class="t" style="left:2px;top:3.79px;font-size:12.3px;line-height:12.3px;color:#000;">*Silberstahl Rundstange / Welle DI...</div></div>
<div style="left:841px;top:556px;width:40px;height:21px;background:#fffde1;border-right:1px solid #dadada;border-bottom:1px solid #dadada"></div>
<div class="cb" style="left:854px;top:559px;width:13px;height:13px;"></div>
<div style="left:881px;top:556px;width:80px;height:21px;background:#ffffff;border-right:1px solid #dadada;border-bottom:1px solid #dadada"></div>
<div style="left:881px;top:556px;width:80px;height:21px;overflow:hidden"><div class="t" style="left:0px;top:3.79px;font-size:12.3px;line-height:12.3px;width:76px;text-align:right;color:#000;">162,00</div></div>
<div style="left:961px;top:556px;width:50px;height:21px;background:#fffde1;border-right:1px solid #dadada;border-bottom:1px solid #dadada"></div>
<div style="left:961px;top:556px;width:50px;height:21px;overflow:hidden"><div class="t" style="left:2px;top:3.79px;font-size:12.3px;line-height:12.3px;color:#000;">m</div></div>
<div style="left:1011px;top:556px;width:75px;height:21px;background:#fffde1;border-right:1px solid #dadada;border-bottom:1px solid #dadada"></div>
<div style="left:1011px;top:556px;width:75px;height:21px;overflow:hidden"><div class="t" style="left:0px;top:3.79px;font-size:12.3px;line-height:12.3px;width:71px;text-align:right;color:#000;">0,000</div></div>
<div style="left:1086px;top:556px;width:75px;height:21px;background:#fffde1;border-right:1px solid #dadada;border-bottom:1px solid #dadada"></div>
<div style="left:1086px;top:556px;width:75px;height:21px;overflow:hidden"><div class="t" style="left:0px;top:3.79px;font-size:12.3px;line-height:12.3px;width:71px;text-align:right;color:#000;">-155,24</div></div>
<div style="left:1161px;top:556px;width:96px;height:21px;background:#ffffff;border-right:1px solid #dadada;border-bottom:1px solid #dadada"></div>
<div style="left:1257px;top:556px;width:46px;height:21px;background:#ffffff;border-right:1px solid #dadada;border-bottom:1px solid #dadada"></div>
<div class="cb" style="left:1273px;top:559px;width:13px;height:13px;"><svg width="11" height="11" style="position:absolute;left:0;top:0"><polyline points="2,5.5 4.5,8.5 9.5,2" fill="none" stroke="#333" stroke-width="1.3"/></svg></div>
<div style="left:1303px;top:556px;width:142px;height:21px;background:#fffde1;border-right:1px solid #dadada;border-bottom:1px solid #dadada"></div>
<div style="left:1303px;top:556px;width:142px;height:21px;overflow:hidden"><div class="t" style="left:2px;top:3.79px;font-size:12.3px;line-height:12.3px;color:#000;">DIN EN 123456,EN9100</div></div>
<div style="left:1445px;top:556px;width:142px;height:21px;background:#8ed28a;border-right:1px solid #dadada;border-bottom:1px solid #dadada"></div>
<div style="left:1587px;top:556px;width:55px;height:21px;background:#c4e5a6;border-right:1px solid #dadada;border-bottom:1px solid #dadada"></div>
<svg style="position:absolute;left:1606px;top:560px" width="16" height="12" viewBox="0 0 16 12"><path d="M0.5 0.5 H11.5 L15.5 4.5 V11.5 H0.5 Z" fill="#fdfdfd" stroke="#d4d4d4"/><path d="M11.5 0.5 V4.5 H15.5" fill="#e8e8e8" stroke="#d4d4d4"/><text x="7.5" y="9.6" font-size="11" font-style="italic" fill="#a8a8a8" text-anchor="middle" font-family="Liberation Sans">a</text></svg>
<div style="left:1642px;top:556px;width:74px;height:21px;background:#ffffff;border-bottom:1px solid #dadada"></div>
<div style="left:1642px;top:556px;width:75px;height:21px;overflow:hidden"><div class="t" style="left:2px;top:3.79px;font-size:12.3px;line-height:12.3px;color:#000;text-decoration:underline;">STAHL</div></div>
<div style="left:42px;top:577px;width:23px;height:21px;background:#0a70d6;border-right:1px solid #dadada;border-bottom:1px solid #dadada"></div>
<div style="left:42px;top:577px;width:23px;height:21px;overflow:hidden"><div class="t" style="left:0px;top:3.79px;font-size:12.3px;line-height:12.3px;color:#fff;">1</div></div>
<div style="left:65px;top:577px;width:40px;height:21px;background:#0a70d6;border-right:1px solid #dadada;border-bottom:1px solid #dadada"></div>
<div style="left:65px;top:577px;width:40px;height:21px;overflow:hidden"><div class="t" style="left:0px;top:3.79px;font-size:12.3px;line-height:12.3px;width:36px;text-align:right;color:#fff;">50</div></div>
<div style="left:105px;top:577px;width:46px;height:21px;background:#0a70d6;border-right:1px solid #dadada;border-bottom:1px solid #dadada"></div>
<div class="cb" style="left:121px;top:580px;width:13px;height:13px;"></div>
<div style="left:151px;top:577px;width:100px;height:21px;background:#0a70d6;border-right:1px solid #dadada;border-bottom:1px solid #dadada"></div>
<div style="left:151px;top:577px;width:100px;height:21px;overflow:hidden"><div class="t" style="left:2px;top:4.72px;font-size:11.2px;line-height:11.2px;color:#fff;letter-spacing:-0.2px;">Steffen Angrick</div></div>
<div style="left:251px;top:577px;width:110px;height:21px;background:#0a70d6;border-right:1px solid #dadada;border-bottom:1px solid #dadada"></div>
<div style="left:251px;top:577px;width:110px;height:21px;overflow:hidden"><div class="t" style="left:2px;top:4.72px;font-size:11.2px;line-height:11.2px;color:#fff;letter-spacing:-0.2px;">AUFTG E AG25-00...</div></div>
<div style="left:361px;top:577px;width:65px;height:21px;background:#efefef;border-right:1px solid #dadada;border-bottom:1px solid #dadada"></div>
<div style="left:361px;top:577px;width:65px;height:21px;overflow:hidden"><div class="t" style="left:2px;top:3.79px;font-size:12.3px;line-height:12.3px;color:#000;">14.08.25</div></div>
<div style="left:426px;top:577px;width:65px;height:21px;background:#0a70d6;border-right:1px solid #dadada;border-bottom:1px solid #dadada"></div>
<div style="left:426px;top:577px;width:65px;height:21px;overflow:hidden"><div class="t" style="left:2px;top:3.79px;font-size:12.3px;line-height:12.3px;color:#fff;">18.09.25</div></div>
<div style="left:491px;top:577px;width:140px;height:21px;background:#0a70d6;border-right:1px solid #dadada;border-bottom:1px solid #dadada"></div>
<div style="left:491px;top:577px;width:140px;height:21px;overflow:hidden"><div class="t" style="left:2px;top:3.79px;font-size:12.3px;line-height:12.3px;color:#fff;text-decoration:underline;">L.100X1000-0001</div></div>
<div style="left:631px;top:577px;width:210px;height:21px;background:#0a70d6;border-right:1px solid #dadada;border-bottom:1px solid #dadada"></div>
<div style="left:631px;top:577px;width:210px;height:21px;overflow:hidden"><div class="t" style="left:2px;top:3.79px;font-size:12.3px;line-height:12.3px;color:#fff;">*L-Profil Silberstahl*</div></div>
<div style="left:841px;top:577px;width:40px;height:21px;background:#f6b7a7;border-right:1px solid #dadada;border-bottom:1px solid #dadada"></div>
<div class="cb" style="left:854px;top:580px;width:13px;height:13px;"><svg width="11" height="11" style="position:absolute;left:0;top:0"><polyline points="2,5.5 4.5,8.5 9.5,2" fill="none" stroke="#333" stroke-width="1.3"/></svg></div>
<div style="left:881px;top:577px;width:80px;height:21px;background:#0a70d6;border-right:1px solid #dadada;border-bottom:1px solid #dadada"></div>
<div style="left:881px;top:577px;width:80px;height:21px;overflow:hidden"><div class="t" style="left:0px;top:3.79px;font-size:12.3px;line-height:12.3px;width:76px;text-align:right;color:#fff;">20,00</div></div>
<div style="left:961px;top:577px;width:50px;height:21px;background:#0a70d6;border-right:1px solid #dadada;border-bottom:1px solid #dadada"></div>
<div style="left:961px;top:577px;width:50px;height:21px;overflow:hidden"><div class="t" style="left:2px;top:3.79px;font-size:12.3px;line-height:12.3px;color:#fff;">Stk</div></div>
<div style="left:1011px;top:577px;width:75px;height:21px;background:#0a70d6;border-right:1px solid #dadada;border-bottom:1px solid #dadada"></div>
<div style="left:1011px;top:577px;width:75px;height:21px;overflow:hidden"><div class="t" style="left:0px;top:3.79px;font-size:12.3px;line-height:12.3px;width:71px;text-align:right;color:#fff;">0,000</div></div>
<div style="left:1086px;top:577px;width:75px;height:21px;background:#0a70d6;border-right:1px solid #dadada;border-bottom:1px solid #dadada"></div>
<div style="left:1086px;top:577px;width:75px;height:21px;overflow:hidden"><div class="t" style="left:0px;top:3.79px;font-size:12.3px;line-height:12.3px;width:71px;text-align:right;color:#fff;">-20,00</div></div>
<div style="left:1161px;top:577px;width:96px;height:21px;background:#0a70d6;border-right:1px solid #dadada;border-bottom:1px solid #dadada"></div>
<div style="left:1257px;top:577px;width:46px;height:21px;background:#0a70d6;border-right:1px solid #dadada;border-bottom:1px solid #dadada"></div>
<div class="cb" style="left:1273px;top:580px;width:13px;height:13px;"></div>
<div style="left:1303px;top:577px;width:142px;height:21px;background:#0a70d6;border-right:1px solid #dadada;border-bottom:1px solid #dadada"></div>
<div style="left:1303px;top:577px;width:142px;height:21px;overflow:hidden"><div class="t" style="left:2px;top:3.79px;font-size:12.3px;line-height:12.3px;color:#fff;">DIN EN 123456,EN9100</div></div>
<div style="left:1445px;top:577px;width:142px;height:21px;background:#0a70d6;border-right:1px solid #dadada;border-bottom:1px solid #dadada"></div>
<div style="left:1445px;top:577px;width:142px;height:21px;overflow:hidden"><div class="t" style="left:2px;top:3.79px;font-size:12.3px;line-height:12.3px;color:#fff;">EN9100</div></div>
<div style="left:1587px;top:577px;width:55px;height:21px;background:#0a70d6;border-right:1px solid #dadada;border-bottom:1px solid #dadada"></div>
<svg style="position:absolute;left:1597px;top:581px" width="16" height="12" viewBox="0 0 16 12"><path d="M0.5 0.5 H11.5 L15.5 4.5 V11.5 H0.5 Z" fill="#fdfdfd" stroke="#d4d4d4"/><path d="M11.5 0.5 V4.5 H15.5" fill="#e8e8e8" stroke="#d4d4d4"/><text x="7.5" y="9.6" font-size="11" font-style="italic" fill="#a8a8a8" text-anchor="middle" font-family="Liberation Sans">a</text></svg>
<div style="left:1642px;top:577px;width:74px;height:21px;background:#0a70d6;border-bottom:1px solid #dadada"></div>
<div style="left:1642px;top:577px;width:75px;height:21px;overflow:hidden"><div class="t" style="left:2px;top:3.79px;font-size:12.3px;line-height:12.3px;color:#fff;text-decoration:underline;">GETRIEBE-GMBH</div></div>
<div style="left:42px;top:598px;width:23px;height:21px;background:#fffde1;border-right:1px solid #dadada;border-bottom:1px solid #dadada"></div>
<div style="left:42px;top:598px;width:23px;height:21px;overflow:hidden"><div class="t" style="left:0px;top:3.79px;font-size:12.3px;line-height:12.3px;color:#000;">1</div></div>
<div style="left:65px;top:598px;width:40px;height:21px;background:#ffffff;border-right:1px solid #dadada;border-bottom:1px solid #dadada"></div>
<div style="left:65px;top:598px;width:40px;height:21px;overflow:hidden"><div class="t" style="left:0px;top:3.79px;font-size:12.3px;line-height:12.3px;width:36px;text-align:right;color:#000;">60</div></div>
<div style="left:105px;top:598px;width:46px;height:21px;background:#ffffff;border-right:1px solid #dadada;border-bottom:1px solid #dadada"></div>
<div class="cb" style="left:121px;top:601px;width:13px;height:13px;"></div>
<div style="left:151px;top:598px;width:100px;height:21px;background:#fffde1;border-right:1px solid #dadada;border-bottom:1px solid #dadada"></div>
<div style="left:151px;top:598px;width:100px;height:21px;overflow:hidden"><div class="t" style="left:2px;top:4.72px;font-size:11.2px;line-height:11.2px;color:#000;letter-spacing:-0.2px;">CIMPCS</div></div>
<div style="left:251px;top:598px;width:110px;height:21px;background:#fffde1;border-right:1px solid #dadada;border-bottom:1px solid #dadada"></div>
<div style="left:251px;top:598px;width:110px;height:21px;overflow:hidden"><div class="t" style="left:2px;top:4.72px;font-size:11.2px;line-height:11.2px;color:#000;letter-spacing:-0.2px;">AUFTG E AG25-00...</div></div>
<div style="left:361px;top:598px;width:65px;height:21px;background:#ffffff;border-right:1px solid #dadada;border-bottom:1px solid #dadada"></div>
<div style="left:361px;top:598px;width:65px;height:21px;overflow:hidden"><div class="t" style="left:2px;top:3.79px;font-size:12.3px;line-height:12.3px;color:#000;">19.09.25</div></div>
<div style="left:426px;top:598px;width:65px;height:21px;background:#ffffff;border-right:1px solid #dadada;border-bottom:1px solid #dadada"></div>
<div style="left:426px;top:598px;width:65px;height:21px;overflow:hidden"><div class="t" style="left:2px;top:3.79px;font-size:12.3px;line-height:12.3px;color:#000;">21.09.25</div></div>
<div style="left:491px;top:598px;width:140px;height:21px;background:#ffffff;border-right:1px solid #dadada;border-bottom:1px solid #dadada"></div>
<div style="left:491px;top:598px;width:140px;height:21px;overflow:hidden"><div class="t" style="left:2px;top:3.79px;font-size:12.3px;line-height:12.3px;color:#000;text-decoration:underline;">ART NORM</div></div>
<div style="left:631px;top:598px;width:210px;height:21px;background:#ffffff;border-right:1px solid #dadada;border-bottom:1px solid #dadada"></div>
<div style="left:631px;top:598px;width:210px;height:21px;overflow:hidden"><div class="t" style="left:2px;top:3.79px;font-size:12.3px;line-height:12.3px;color:#000;">*FA Normforderung*</div></div>
<div style="left:841px;top:598px;width:40px;height:21px;background:#fffde1;border-right:1px solid #dadada;border-bottom:1px solid #dadada"></div>
<div class="cb" style="left:854px;top:601px;width:13px;height:13px;"></div>
<div style="left:881px;top:598px;width:80px;height:21px;background:#ffffff;border-right:1px solid #dadada;border-bottom:1px solid #dadada"></div>
<div style="left:881px;top:598px;width:80px;height:21px;overflow:hidden"><div class="t" style="left:0px;top:3.79px;font-size:12.3px;line-height:12.3px;width:76px;text-align:right;color:#000;">20,00</div></div>
<div style="left:961px;top:598px;width:50px;height:21px;background:#fffde1;border-right:1px solid #dadada;border-bottom:1px solid #dadada"></div>
<div style="left:961px;top:598px;width:50px;height:21px;overflow:hidden"><div class="t" style="left:2px;top:3.79px;font-size:12.3px;line-height:12.3px;color:#000;">Stk</div></div>
<div style="left:1011px;top:598px;width:75px;height:21px;background:#fffde1;border-right:1px solid #dadada;border-bottom:1px solid #dadada"></div>
<div style="left:1011px;top:598px;width:75px;height:21px;overflow:hidden"><div class="t" style="left:0px;top:3.79px;font-size:12.3px;line-height:12.3px;width:71px;text-align:right;color:#000;">0,000</div></div>
<div style="left:1086px;top:598px;width:75px;height:21px;background:#fffde1;border-right:1px solid #dadada;border-bottom:1px solid #dadada"></div>
<div style="left:1086px;top:598px;width:75px;height:21px;overflow:hidden"><div class="t" style="left:0px;top:3.79px;font-size:12.3px;line-height:12.3px;width:71px;text-align:right;color:#000;">0,00</div></div>
<div style="left:1161px;top:598px;width:96px;height:21px;background:#ffffff;border-right:1px solid #dadada;border-bottom:1px solid #dadada"></div>
<div style="left:1257px;top:598px;width:46px;height:21px;background:#ffffff;border-right:1px solid #dadada;border-bottom:1px solid #dadada"></div>
<div class="cb" style="left:1273px;top:601px;width:13px;height:13px;"></div>
<div style="left:1303px;top:598px;width:142px;height:21px;background:#fffde1;border-right:1px solid #dadada;border-bottom:1px solid #dadada"></div>
<div style="left:1303px;top:598px;width:142px;height:21px;overflow:hidden"><div class="t" style="left:2px;top:3.79px;font-size:12.3px;line-height:12.3px;color:#000;">EN9100,ISO Goldham...</div></div>
<div style="left:1445px;top:598px;width:142px;height:21px;background:#fffde1;border-right:1px solid #dadada;border-bottom:1px solid #dadada"></div>
<div style="left:1445px;top:598px;width:142px;height:21px;overflow:hidden"><div class="t" style="left:2px;top:3.79px;font-size:12.3px;line-height:12.3px;color:#000;">EN9100,ISO Goldham...</div></div>
<div style="left:1587px;top:598px;width:55px;height:21px;background:#c4e5a6;border-right:1px solid #dadada;border-bottom:1px solid #dadada"></div>
<svg style="position:absolute;left:1606px;top:602px" width="16" height="12" viewBox="0 0 16 12"><path d="M0.5 0.5 H11.5 L15.5 4.5 V11.5 H0.5 Z" fill="#fdfdfd" stroke="#d4d4d4"/><path d="M11.5 0.5 V4.5 H15.5" fill="#e8e8e8" stroke="#d4d4d4"/><text x="7.5" y="9.6" font-size="11" font-style="italic" fill="#a8a8a8" text-anchor="middle" font-family="Liberation Sans">a</text></svg>
<div style="left:1642px;top:598px;width:74px;height:21px;background:#ffffff;border-bottom:1px solid #dadada"></div>
<div style="left:1642px;top:598px;width:75px;height:21px;overflow:hidden"><div class="t" style="left:2px;top:3.79px;font-size:12.3px;line-height:12.3px;color:#000;text-decoration:underline;">QSF B LIEF</div></div>
<div style="left:42px;top:619px;width:23px;height:21px;background:#fffde1;border-right:1px solid #dadada;border-bottom:1px solid #dadada"></div>
<div style="left:42px;top:619px;width:23px;height:21px;overflow:hidden"><div class="t" style="left:0px;top:3.79px;font-size:12.3px;line-height:12.3px;color:#000;">1</div></div>
<div style="left:65px;top:619px;width:40px;height:21px;background:#efefef;border-right:1px solid #dadada;border-bottom:1px solid #dadada"></div>
<div style="left:65px;top:619px;width:40px;height:21px;overflow:hidden"><div class="t" style="left:0px;top:3.79px;font-size:12.3px;line-height:12.3px;width:36px;text-align:right;color:#000;">70</div></div>
<div style="left:105px;top:619px;width:46px;height:21px;background:#efefef;border-right:1px solid #dadada;border-bottom:1px solid #dadada"></div>
<div class="cb" style="left:121px;top:622px;width:13px;height:13px;"></div>
<div style="left:151px;top:619px;width:100px;height:21px;background:#fffde1;border-right:1px solid #dadada;border-bottom:1px solid #dadada"></div>
<div style="left:151px;top:619px;width:100px;height:21px;overflow:hidden"><div class="t" style="left:2px;top:4.72px;font-size:11.2px;line-height:11.2px;color:#000;letter-spacing:-0.2px;">WEC</div></div>
<div style="left:251px;top:619px;width:110px;height:21px;background:#fffde1;border-right:1px solid #dadada;border-bottom:1px solid #dadada"></div>
<div style="left:251px;top:619px;width:110px;height:21px;overflow:hidden"><div class="t" style="left:2px;top:4.72px;font-size:11.2px;line-height:11.2px;color:#000;letter-spacing:-0.2px;">BANF 123456 1</div></div>
<div style="left:361px;top:619px;width:65px;height:21px;background:#efefef;border-right:1px solid #dadada;border-bottom:1px solid #dadada"></div>
<div style="left:361px;top:619px;width:65px;height:21px;overflow:hidden"><div class="t" style="left:2px;top:3.79px;font-size:12.3px;line-height:12.3px;color:#000;">02.10.25</div></div>
<div style="left:426px;top:619px;width:65px;height:21px;background:#efefef;border-right:1px solid #dadada;border-bottom:1px solid #dadada"></div>
<div style="left:426px;top:619px;width:65px;height:21px;overflow:hidden"><div class="t" style="left:2px;top:3.79px;font-size:12.3px;line-height:12.3px;color:#000;">03.10.25</div></div>
<div style="left:491px;top:619px;width:140px;height:21px;background:#efefef;border-right:1px solid #dadada;border-bottom:1px solid #dadada"></div>
<div style="left:491px;top:619px;width:140px;height:21px;overflow:hidden"><div class="t" style="left:2px;top:3.79px;font-size:12.3px;line-height:12.3px;color:#000;text-decoration:underline;">1100001</div></div>
<div style="left:631px;top:619px;width:210px;height:21px;background:#efefef;border-right:1px solid #dadada;border-bottom:1px solid #dadada"></div>
<div style="left:631px;top:619px;width:210px;height:21px;overflow:hidden"><div class="t" style="left:2px;top:3.79px;font-size:12.3px;line-height:12.3px;color:#000;">*Aceton*</div></div>
<div style="left:841px;top:619px;width:40px;height:21px;background:#fffde1;border-right:1px solid #dadada;border-bottom:1px solid #dadada"></div>
<div class="cb" style="left:854px;top:622px;width:13px;height:13px;"></div>
<div style="left:881px;top:619px;width:80px;height:21px;background:#efefef;border-right:1px solid #dadada;border-bottom:1px solid #dadada"></div>
<div style="left:881px;top:619px;width:80px;height:21px;overflow:hidden"><div class="t" style="left:0px;top:3.79px;font-size:12.3px;line-height:12.3px;width:76px;text-align:right;color:#000;">3,00</div></div>
<div style="left:961px;top:619px;width:50px;height:21px;background:#fffde1;border-right:1px solid #dadada;border-bottom:1px solid #dadada"></div>
<div style="left:961px;top:619px;width:50px;height:21px;overflow:hidden"><div class="t" style="left:2px;top:3.79px;font-size:12.3px;line-height:12.3px;color:#000;">Stk</div></div>
<div style="left:1011px;top:619px;width:75px;height:21px;background:#fffde1;border-right:1px solid #dadada;border-bottom:1px solid #dadada"></div>
<div style="left:1011px;top:619px;width:75px;height:21px;overflow:hidden"><div class="t" style="left:0px;top:3.79px;font-size:12.3px;line-height:12.3px;width:71px;text-align:right;color:#000;">0,000</div></div>
<div style="left:1086px;top:619px;width:75px;height:21px;background:#fffde1;border-right:1px solid #dadada;border-bottom:1px solid #dadada"></div>
<div style="left:1086px;top:619px;width:75px;height:21px;overflow:hidden"><div class="t" style="left:0px;top:3.79px;font-size:12.3px;line-height:12.3px;width:71px;text-align:right;color:#000;">0,00</div></div>
<div style="left:1161px;top:619px;width:96px;height:21px;background:#efefef;border-right:1px solid #dadada;border-bottom:1px solid #dadada"></div>
<div style="left:1257px;top:619px;width:46px;height:21px;background:#efefef;border-right:1px solid #dadada;border-bottom:1px solid #dadada"></div>
<div class="cb" style="left:1273px;top:622px;width:13px;height:13px;"></div>
<div style="left:1303px;top:619px;width:142px;height:21px;background:#fffde1;border-right:1px solid #dadada;border-bottom:1px solid #dadada"></div>
<div style="left:1303px;top:619px;width:142px;height:21px;overflow:hidden"><div class="t" style="left:2px;top:3.79px;font-size:12.3px;line-height:12.3px;color:#000;">EN9100,ISO0815</div></div>
<div style="left:1445px;top:619px;width:142px;height:21px;background:#fffde1;border-right:1px solid #dadada;border-bottom:1px solid #dadada"></div>
<div style="left:1445px;top:619px;width:142px;height:21px;overflow:hidden"><div class="t" style="left:2px;top:3.79px;font-size:12.3px;line-height:12.3px;color:#000;">ISO0815</div></div>
<div style="left:1587px;top:619px;width:55px;height:21px;background:#c4e5a6;border-right:1px solid #dadada;border-bottom:1px solid #dadada"></div>
<svg style="position:absolute;left:1606px;top:623px" width="16" height="12" viewBox="0 0 16 12"><path d="M0.5 0.5 H11.5 L15.5 4.5 V11.5 H0.5 Z" fill="#fdfdfd" stroke="#d4d4d4"/><path d="M11.5 0.5 V4.5 H15.5" fill="#e8e8e8" stroke="#d4d4d4"/><text x="7.5" y="9.6" font-size="11" font-style="italic" fill="#a8a8a8" text-anchor="middle" font-family="Liberation Sans">a</text></svg>
<div style="left:1642px;top:619px;width:74px;height:21px;background:#ffff85;border-bottom:1px solid #dadada"></div>
<div style="left:1642px;top:619px;width:75px;height:21px;overflow:hidden"><div class="t" style="left:2px;top:3.79px;font-size:12.3px;line-height:12.3px;color:#000;text-decoration:underline;">STAHL</div></div>
<div style="left:361px;top:577px;width:64px;height:1px;border-top:1px dotted #333"></div>
<div style="left:361px;top:596px;width:64px;height:1px;border-top:1px dotted #333"></div>
<div style="left:42px;top:577px;width:319px;height:1px;border-top:1px dotted #f08a30"></div>
<div style="left:42px;top:596px;width:319px;height:1px;border-top:1px dotted #f08a30"></div>
<div style="left:425px;top:577px;width:1291px;height:1px;border-top:1px dotted #f08a30"></div>
<div style="left:425px;top:596px;width:1291px;height:1px;border-top:1px dotted #f08a30"></div>
<div style="left:612px;top:579px;width:16px;height:17px;background:#d9d9d9;border:1px solid #aaa"><div style="left:3px;top:1px;font-size:10px;color:#333">···</div></div>
<div style="left:992px;top:579px;width:16px;height:17px;background:#d9d9d9;border:1px solid #aaa"><div style="left:3px;top:1px;font-size:10px;color:#333">···</div></div>
<div style="left:1622px;top:579px;width:18px;height:17px;background:#d9d9d9;border:1px solid #aaa"><svg width="16" height="15" style="position:absolute;left:0;top:0"><polyline points="4,6 8,10 12,6" fill="none" stroke="#333" stroke-width="1.2"/></svg></div>
<svg style="position:absolute;left:33px;top:582px" width="9" height="11" viewBox="0 0 9 11"><path d="M1.5 1 L6.5 5.5 L1.5 10" fill="none" stroke="#000" stroke-width="1.3" stroke-dasharray="2 0.6"/><path d="M1.2 3.5 V7.5" stroke="#000" stroke-width="1.3"/><rect x="6" y="4.8" width="2" height="1.4" fill="#000"/></svg>
<div style="left:30px;top:990px;width:1686px;height:26px;background:#efefef;border-top:1px solid #dadada;box-shadow:inset 0 1px 0 #f6f6fa"></div>
<div style="left:41px;top:991px;width:1px;height:24px;background:#c8c8c8"></div>
<div style="left:66px;top:993px;width:38px;height:21px;background:#e2e4e8;border:1px solid #d0d2d6"></div>
<div class="t" style="left:64px;top:998.09px;font-size:12.3px;line-height:12.3px;width:36px;text-align:right;">7</div>
<div style="left:95px;top:1012px;width:760px;height:2px;background:#5a5a5a"></div>
<div style="left:29px;top:370px;width:1687px;height:23px;background:#ece8d9;border-top:1px solid #8b8e98;border-left:1px solid #8b8e98"></div>
<div style="left:29px;top:392px;width:1688px;height:1px;background:#fafafa"></div>
<div style="left:31px;top:372px;width:20px;height:19px;background:#e2e2e2;border:1px solid #a5a5a5"></div>
<div style="left:53px;top:372px;width:20px;height:19px;background:#e2e2e2;border:1px solid #a5a5a5"></div>
<div style="left:75px;top:372px;width:20px;height:19px;background:#e2e2e2;border:1px solid #a5a5a5"></div>
<svg style="position:absolute;left:33px;top:374px" width="16" height="15" viewBox="0 0 16 15"><rect x="0.5" y="0.5" width="15" height="14" fill="#f2f0ff" stroke="#777"/><rect x="1" y="5" width="14" height="5" fill="#f8b040"/><path d="M5.5 1 V14 M10.5 1 V14" stroke="#bbb"/></svg>
<svg style="position:absolute;left:55px;top:374px" width="16" height="15" viewBox="0 0 16 15"><ellipse cx="9.5" cy="3.5" rx="6" ry="2.5" fill="#f4f4f4" stroke="#555"/><path d="M3.5 3.5 L8.5 9 V14 L10.5 13 V9 L15.5 3.5" fill="#aaa" stroke="#555"/><path d="M1 9 L6 14 M6 9 L1 14" stroke="#e83010" stroke-width="2.2"/></svg>
<svg style="position:absolute;left:77px;top:375px" width="16" height="13" viewBox="0 0 16 13"><path d="M1 5 L6 1 L10 3 L15 5 L14 10 L10 9 L7 10 Z" fill="#9a9a9a" stroke="#555" stroke-width="0.8"/><circle cx="7.5" cy="8.5" r="2.4" fill="#a8d4ff" stroke="#555" stroke-width="0.8"/><circle cx="12.5" cy="8" r="2.4" fill="#a8d4ff" stroke="#555" stroke-width="0.8"/></svg>
<div style="left:1542px;top:372px;width:33px;height:19px;background:#e2e2e2;border:1px solid #a0a0a0"></div>
<div style="left:1577px;top:372px;width:33px;height:19px;background:#e2e2e2;border:1px solid #a0a0a0"></div>
<div style="left:1612px;top:372px;width:33px;height:19px;background:#c9c9c9;border:1px solid #a0a0a0"></div>
<div style="left:1647px;top:372px;width:33px;height:19px;background:#c9c9c9;border:1px solid #a0a0a0"></div>
<div style="left:1682px;top:372px;width:33px;height:19px;background:#e2e2e2;border:1px solid #a0a0a0"></div>
<svg style="position:absolute;left:1551px;top:374px" width="15" height="15" viewBox="0 0 15 15"><rect x="6" y="2" width="3" height="11" fill="#d63a1e"/><rect x="2" y="6" width="11" height="3" fill="#d63a1e"/></svg>
<svg style="position:absolute;left:1586px;top:374px" width="15" height="15" viewBox="0 0 15 15"><rect x="2" y="6" width="11" height="3" fill="#d63a1e"/></svg>
<svg style="position:absolute;left:1620px;top:374px" width="16" height="15" viewBox="0 0 16 15"><polyline points="2,7 6,11 14,3" fill="none" stroke="#8ec8a8" stroke-width="2.2"/></svg>
<svg style="position:absolute;left:1656px;top:374px" width="15" height="15" viewBox="0 0 15 15"><path d="M3 3 L12 12 M12 3 L3 12" stroke="#e59080" stroke-width="2.2"/></svg>
<svg style="position:absolute;left:1690px;top:373px" width="17" height="17" viewBox="0 0 17 17"><path d="M12.5 5.5 A5.5 5.5 0 1 1 8 3" fill="none" stroke="#2a78c8" stroke-width="2"/><polygon points="7,0 12,3 7,6" fill="#2a78c8"/></svg>
<div style="left:36px;top:402px;width:57px;height:21px;background:#fff"></div>
<div class="t" style="left:39px;top:406.39px;font-size:12.3px;line-height:12.3px;">Typ</div>
<svg style="position:absolute;left:79px;top:407px" width="9" height="10"><polygon points="4.5,0.8 8.2,8.5 0.8,8.5" fill="none" stroke="#999" stroke-width="0.9"/></svg>
<svg style="position:absolute;left:50px;top:93px" width="28" height="28" viewBox="0 0 28 28"><defs><radialGradient id="hg" cx="0.35" cy="0.35" r="0.75"><stop offset="0" stop-color="#7ad858"/><stop offset="0.6" stop-color="#2aa41e"/><stop offset="1" stop-color="#14850f"/></radialGradient></defs><circle cx="14" cy="14.5" r="10.5" fill="#2a2c38" opacity="0.55"/><circle cx="13" cy="13" r="9.7" fill="url(#hg)" stroke="#f2eef4" stroke-width="1.7"/><text x="13" y="18.6" font-size="15.5" font-weight="700" fill="#fff" text-anchor="middle" font-family="Liberation Sans">?</text></svg>
<svg style="position:absolute;left:30px;top:58px" width="18" height="18" viewBox="0 0 18 18"><defs><linearGradient id="wg" x1="0" y1="0" x2="1" y2="1"><stop offset="0" stop-color="#fff"/><stop offset="1" stop-color="#d4d4fa"/></linearGradient></defs><rect x="2.5" y="2.5" width="13" height="13" rx="1.5" fill="url(#wg)" stroke="#1a98f8" stroke-width="1.6"/><rect x="3" y="3" width="12" height="1.8" fill="#8ccaf8"/><path d="M2.5 5.2 H15.5" stroke="#1a98f8" stroke-width="1"/></svg>
<svg style="position:absolute;left:54px;top:58px" width="18" height="18" viewBox="0 0 18 18"><path d="M8 1.5 H13 L15.5 4 V13.5 H8 Z" fill="#efeaf8" stroke="#7a5aa8"/><path d="M2.5 4.5 H8 L10.5 7 V16.5 H2.5 Z" fill="#eef2fa" stroke="#5a6a98"/><rect x="4" y="10" width="5" height="4" fill="#a8b8d8"/></svg>
<svg style="position:absolute;left:78px;top:58px" width="18" height="18" viewBox="0 0 18 18"><circle cx="9.5" cy="9.5" r="7" fill="#666" opacity="0.5"/><circle cx="9" cy="8.7" r="6.4" fill="#26a820" stroke="#f0e8f0" stroke-width="1.1"/><text x="9" y="12.4" font-size="9.5" font-weight="700" fill="#fff" text-anchor="middle" font-family="Liberation Sans">?</text></svg>
<svg style="position:absolute;left:105px;top:58px" width="18" height="18" viewBox="0 0 18 18"><rect x="2" y="3" width="10" height="13" fill="#f0b860"/><rect x="5" y="1" width="5" height="3" rx="1" fill="#777"/><rect x="7" y="7" width="9" height="10" fill="#fff" stroke="#666"/><path d="M9 10 H14 M9 12 H14 M9 14 H14" stroke="#2a6ad8"/></svg>
<svg style="position:absolute;left:135px;top:58px" width="18" height="18" viewBox="0 0 18 18"><path d="M14.25 7.72 L16.13 7.99 L16.13 10.01 L14.25 10.28 L14.00 11.05 L15.36 12.37 L14.17 14.01 L12.49 13.12 L11.84 13.60 L12.17 15.47 L10.24 16.09 L9.41 14.38 L8.59 14.38 L7.76 16.09 L5.83 15.47 L6.16 13.60 L5.51 13.12 L3.83 14.01 L2.64 12.37 L4.00 11.05 L3.75 10.28 L1.87 10.01 L1.87 7.99 L3.75 7.72 L4.00 6.95 L2.64 5.63 L3.83 3.99 L5.51 4.88 L6.16 4.40 L5.83 2.53 L7.76 1.91 L8.59 3.62 L9.41 3.62 L10.24 1.91 L12.17 2.53 L11.84 4.40 L12.49 4.88 L14.17 3.99 L15.36 5.63 L14.00 6.95 Z" fill="#c4c4ec" stroke="#7a7ab8" stroke-width="0.8"/><ellipse cx="9" cy="9" rx="2.2" ry="1.7" fill="#e8e8f4" stroke="#8080b0" stroke-width="0.6"/></svg>
<svg style="position:absolute;left:159px;top:58px" width="18" height="18" viewBox="0 0 18 18"><rect x="7" y="1.5" width="9" height="13" fill="#fafaff" stroke="#9ab"/><polygon points="6,2 8,6 12,6 9,9 10,13 6,11 2,13 3,9 0,6 4,6" fill="#f8a820" stroke="#e06010" stroke-width="0.6"/><path d="M7 8 L15 16" stroke="#222" stroke-width="2"/></svg>
<svg style="position:absolute;left:1472px;top:60px" width="20" height="14"><rect x="2" y="6" width="12" height="3" fill="#d0401c"/></svg>
<svg style="position:absolute;left:1519px;top:59px" width="20" height="16"><polyline points="2,8 6.5,12.5 14,3.5" fill="none" stroke="#80c8a0" stroke-width="2.3"/></svg>
<svg style="position:absolute;left:1568px;top:60px" width="16" height="15"><path d="M2.5 2.5 L12.5 12.5 M12.5 2.5 L2.5 12.5" stroke="#e09080" stroke-width="2.2"/></svg>
<svg style="position:absolute;left:1613px;top:58px" width="20" height="19" viewBox="0 0 20 19"><path d="M15 6.5 A6.2 6.2 0 1 1 9.5 4" fill="none" stroke="#2a72c0" stroke-width="2.2"/><polygon points="8,0.5 13.5,4 8,7" fill="#2a72c0"/></svg>
<svg style="position:absolute;left:1650px;top:59px" width="16" height="16" viewBox="0 0 16 16"><defs><linearGradient id="clk" x1="0" y1="0" x2="1" y2="1"><stop offset="0" stop-color="#fafaff"/><stop offset="1" stop-color="#c8c8f4"/></linearGradient></defs><ellipse cx="9" cy="8" rx="6" ry="6.5" fill="url(#clk)" stroke="#9a9ad8" stroke-width="0.9"/><ellipse cx="9" cy="14" rx="4" ry="1.4" fill="#c0c0f0" stroke="#9a9ad8" stroke-width="0.6"/><path d="M8 6.5 L9.5 7.8" stroke="#4a4aa0" stroke-width="1.2"/></svg>
<svg style="position:absolute;left:1676px;top:60px" width="17" height="15" viewBox="0 0 17 15"><path d="M1 3 L7 1.5 L15 3 L15 12 L8 14 L1 12 Z" fill="#f4f4f4" stroke="#c8c8c8" stroke-width="0.7"/><path d="M8 3.5 L15 3 V12 L8 14 Z" fill="#a8a8a8"/><path d="M8 3.5 L15 3 V6 L8 6.5 Z" fill="#d8e8f0"/><path d="M7.5 2.5 L8.5 3.5" stroke="#50c050"/></svg>
<svg style="position:absolute;left:1698px;top:60px" width="19" height="16" viewBox="0 0 19 16"><path d="M2 3 L8 1.5 L15 3 L15 12 L8 14 L2 12 Z" fill="#f4f4f4" stroke="#c8c8c8" stroke-width="0.7"/><path d="M8.5 3.5 L15 3 V12 L8.5 14 Z" fill="#a8a8a8"/><path d="M8.5 3.5 L15 3 V6 L8.5 6.5 Z" fill="#d8e8f0"/><polygon points="10.5,8 16,11.5 10.5,15.5" fill="#38b828"/></svg>
<svg style="position:absolute;left:5px;top:85px" width="14" height="17" viewBox="0 0 14 17"><defs><linearGradient id="sky" x1="0" y1="0" x2="0" y2="1"><stop offset="0" stop-color="#a8d8f8"/><stop offset="0.55" stop-color="#ffffff"/><stop offset="0.6" stop-color="#60d040"/><stop offset="1" stop-color="#40b030"/></linearGradient></defs><rect x="1.5" y="1.5" width="10.5" height="13.5" fill="#8a8a8a"/><rect x="2.5" y="2.5" width="8.5" height="11.5" fill="url(#sky)"/><polygon points="5,2.8 11.2,2 11.2,13.8 5,15.5" fill="#f2b414"/><rect x="6.5" y="3.8" width="2.8" height="1" fill="#fff"/><circle cx="6.6" cy="9.5" r="0.7" fill="#eee"/></svg>
<svg style="position:absolute;left:3px;top:110px" width="18" height="18" viewBox="0 0 18 18"><defs><linearGradient id="gg1" x1="0" y1="0" x2="1" y2="1"><stop offset="0" stop-color="#f0f0fc"/><stop offset="1" stop-color="#a8a8d8"/></linearGradient></defs><path d="M14.25 7.72 L16.13 7.99 L16.13 10.01 L14.25 10.28 L14.00 11.05 L15.36 12.37 L14.17 14.01 L12.49 13.12 L11.84 13.60 L12.17 15.47 L10.24 16.09 L9.41 14.38 L8.59 14.38 L7.76 16.09 L5.83 15.47 L6.16 13.60 L5.51 13.12 L3.83 14.01 L2.64 12.37 L4.00 11.05 L3.75 10.28 L1.87 10.01 L1.87 7.99 L3.75 7.72 L4.00 6.95 L2.64 5.63 L3.83 3.99 L5.51 4.88 L6.16 4.40 L5.83 2.53 L7.76 1.91 L8.59 3.62 L9.41 3.62 L10.24 1.91 L12.17 2.53 L11.84 4.40 L12.49 4.88 L14.17 3.99 L15.36 5.63 L14.00 6.95 Z" fill="url(#gg1)" stroke="#6a6aa8" stroke-width="0.8"/><ellipse cx="9" cy="9" rx="2.2" ry="1.6" fill="#f4f4f8" stroke="#7070a0" stroke-width="0.7"/></svg>
<div style="left:2px;top:887px;width:22px;height:21px;background:#e2e2e4;border:1px solid #c4c5cf"></div>
<div style="left:2px;top:910px;width:22px;height:21px;background:#e2e2e4;border:1px solid #c4c5cf"></div>
<div style="left:3px;top:936px;width:21px;height:2px;background:#f4f4f8"></div>
<div style="left:2px;top:943px;width:22px;height:21px;background:#e2e2e4;border:1px solid #c4c5cf"></div>
<div style="left:2px;top:966px;width:22px;height:21px;background:#e2e2e4;border:1px solid #c4c5cf"></div>
<div style="left:2px;top:990px;width:22px;height:48px;background:#e2e2e4;border:1px solid #c4c5cf"></div>
<svg style="position:absolute;left:3px;top:888px" width="20" height="19" viewBox="0 0 20 19"><path d="M6 2 L15 1.5 Q17.5 1.5 17.5 4 Q17.5 5.5 15.5 5.5 L14.5 14 L5 16 Z" fill="#f4f4f8" stroke="#9a9aa8" stroke-width="0.8"/><path d="M1.5 13 L5 16 L8 15 L5 12 Z" fill="#c8c8d4" stroke="#9a9aa8" stroke-width="0.6"/><rect x="11" y="11.5" width="8" height="3.5" fill="#2ac02a" stroke="#108010" stroke-width="0.5"/><rect x="13.25" y="9.25" width="3.5" height="8" fill="#2ac02a" stroke="#108010" stroke-width="0.5"/><rect x="11.3" y="11.8" width="7.4" height="2.9" fill="#2ac02a"/></svg>
<svg style="position:absolute;left:3px;top:911px" width="20" height="19" viewBox="0 0 20 19"><path d="M1 6 L4 3.5 L7 8 L3 11 Z" fill="#2a2a2a"/><path d="M19 5 L15.5 2.5 L12.5 7 L16.5 10 Z" fill="#1a3a9a"/><path d="M3.5 8.5 Q6 5.5 10 6.5 L14 6 Q16.5 8 16 11 Q14 15.5 10 16.5 Q5.5 16 4 12.5 Z" fill="#f4985a" stroke="#c86a30" stroke-width="0.7"/><path d="M7 10 Q10 9 13 11" fill="none" stroke="#c86a30" stroke-width="0.6"/></svg>
<svg style="position:absolute;left:7px;top:946px" width="12" height="15" viewBox="0 0 12 15" shape-rendering="crispEdges"><rect x="0.5" y="0.5" width="11" height="14" fill="#fff" stroke="#707070" stroke-width="1"/><rect x="2" y="2" width="8" height="1" fill="#7aa0d0"/><rect x="2" y="4" width="8" height="1" fill="#7aa0d0"/><rect x="2" y="6" width="8" height="1" fill="#7aa0d0"/><rect x="2" y="8" width="8" height="1" fill="#7aa0d0"/><rect x="2" y="10" width="8" height="3" fill="#3a70b8"/></svg>
<svg style="position:absolute;left:4px;top:967px" width="18" height="18" viewBox="0 0 18 18"><defs><radialGradient id="stp" cx="0.5" cy="0.75" r="0.7"><stop offset="0" stop-color="#ffc890"/><stop offset="0.5" stop-color="#ff5a30"/><stop offset="1" stop-color="#e81808"/></radialGradient></defs><polygon points="5.5,1.5 12.5,1.5 16.5,5.5 16.5,12.5 12.5,16.5 5.5,16.5 1.5,12.5 1.5,5.5" fill="url(#stp)" stroke="#e00" stroke-width="0.8"/></svg>
<svg style="position:absolute;left:4px;top:1005px" width="18" height="16" viewBox="0 0 18 16"><polygon points="9,1 17,15 1,15" fill="#f8e040" stroke="#807020" stroke-width="0.9" stroke-linejoin="round"/><rect x="8" y="5" width="2" height="6" fill="#111"/><rect x="8" y="12" width="2" height="2" fill="#111"/></svg>
<div style="left:-6px;top:568px;width:13px;height:190px;background:#025a95;border-radius:4px;border:1px solid #000;box-shadow:1px 1px 2px rgba(0,0,0,0.35)"></div>
<div style="left:0px;top:658px;width:3px;height:2px;background:#fff"></div>
<div style="left:0px;top:662px;width:3px;height:2px;background:#fff"></div>
<div style="left:0px;top:666px;width:3px;height:2px;background:#fff"></div>
<div style="left:26px;top:1019px;width:1694px;height:21px;background:#f0f0f0;border-top:1px solid #cfcfcf"></div>
<div style="left:1719px;top:347px;width:1px;height:673px;background:#e2e2e2"></div>
<div style="left:26px;top:1022px;width:61px;height:18px;border-left:1px solid #a0a0a0;border-top:1px solid #a0a0a0"></div>
<div style="left:91px;top:1022px;width:179px;height:18px;border-left:1px solid #a0a0a0;border-top:1px solid #a0a0a0"></div>
<div style="left:270px;top:1022px;width:80px;height:18px;border-left:1px solid #a0a0a0;border-top:1px solid #a0a0a0"></div>
<div style="left:353px;top:1022px;width:176px;height:18px;border-left:1px solid #a0a0a0;border-top:1px solid #a0a0a0"></div>
<div style="left:532px;top:1022px;width:103px;height:18px;border-left:1px solid #a0a0a0;border-top:1px solid #a0a0a0"></div>
<div style="left:638px;top:1022px;width:86px;height:18px;border-left:1px solid #a0a0a0;border-top:1px solid #a0a0a0"></div>
<div style="left:727px;top:1022px;width:76px;height:18px;border-left:1px solid #a0a0a0;border-top:1px solid #a0a0a0"></div>
<div style="left:806px;top:1022px;width:96px;height:18px;border-left:1px solid #a0a0a0;border-top:1px solid #a0a0a0"></div>
<div style="left:905px;top:1022px;width:101px;height:18px;border-left:1px solid #a0a0a0;border-top:1px solid #a0a0a0"></div>
<div style="left:1009px;top:1022px;width:101px;height:18px;border-left:1px solid #a0a0a0;border-top:1px solid #a0a0a0"></div>
<div style="left:1113px;top:1022px;width:607px;height:18px;border-left:1px solid #a0a0a0;border-top:1px solid #a0a0a0"></div>
<div class="t" style="left:-517px;top:1024.78px;font-size:11.6px;line-height:11.6px;width:600px;text-align:right;color:#111;letter-spacing:-0.5px">Erstellt:</div>
<div class="t" style="left:94px;top:1024.78px;font-size:11.6px;line-height:11.6px;color:#111;">2025-09-18 &nbsp;Steffen Angrick</div>
<div class="t" style="left:-261px;top:1025.38px;font-size:11.6px;line-height:11.6px;width:600px;text-align:right;color:#111;">Bearbeitet:</div>
<div class="t" style="left:356px;top:1024.78px;font-size:11.6px;line-height:11.6px;color:#111;">2025-09-18 &nbsp;Steffen Angrick</div>
<div class="t" style="left:30px;top:1024.78px;font-size:11.6px;line-height:11.6px;width:600px;text-align:right;color:#111;">Wiedervorlage:</div>
<div style="left:641px;top:1024px;width:82px;height:14px;background:linear-gradient(#f8f9fb,#dde3ea);border:1px solid #8a96a6;border-radius:2px"></div>
<div class="t" style="left:281px;top:1025.54px;font-size:10px;line-height:10px;width:800px;text-align:center;font-weight:700;color:#111;">**</div>
<div style="left:677px;top:1035px;width:8px;height:1px;background:#111"></div>
<div class="t" style="left:366px;top:1026.18px;font-size:11.6px;line-height:11.6px;width:800px;text-align:center;color:#1a1ae6;text-decoration:underline">Dokument</div>
<div class="t" style="left:454px;top:1026.18px;font-size:11.6px;line-height:11.6px;width:800px;text-align:center;color:#1a1ae6;text-decoration:underline">Notizen</div>
<div class="t" style="left:556px;top:1026.18px;font-size:11.6px;line-height:11.6px;width:800px;text-align:center;color:#e61a1a;text-decoration:underline">Eigenschaften</div>
<div class="t" style="left:660px;top:1026.18px;font-size:11.6px;line-height:11.6px;width:800px;text-align:center;color:#1a1ae6;text-decoration:underline">Softlink</div>
<div style="left:0px;top:1040px;width:1720px;height:40px;background:#121212"></div>
<div style="left:0px;top:1051px;width:2px;height:18px;background:#e8c040"></div>
<svg style="position:absolute;left:26px;top:1046px" width="28" height="28" viewBox="0 0 28 28"><defs><linearGradient id="ffg" x1="0.85" y1="0.05" x2="0.3" y2="1"><stop offset="0" stop-color="#ffe84a"/><stop offset="0.4" stop-color="#ffa030"/><stop offset="0.75" stop-color="#ff4a3e"/><stop offset="1" stop-color="#e8208a"/></linearGradient><linearGradient id="ffp" x1="0.5" y1="0" x2="0.5" y2="1"><stop offset="0" stop-color="#b040f4"/><stop offset="1" stop-color="#5a50d8"/></linearGradient></defs><path d="M3 15.7 A10.8 10.8 0 1 0 24.5 14 Q24 8 19 4.5 L17.3 2 Q15.5 5 15 9 Z" fill="url(#ffg)"/><path d="M3.2 13 L5 7 L7 10 L8.5 7 L10 10.5 Z" fill="#ff8a28"/><circle cx="14" cy="15.2" r="4.8" fill="url(#ffp)"/><path d="M2.8 16 L3.2 12.5 Q9 10 13 10.5 L17.5 10.5 L15 12.5 L12 12.3 Q10 14 10.5 17 Q7 15.5 2.8 16 Z" fill="#ffa028"/></svg>
<div style="left:20px;top:1078px;width:40px;height:2px;background:#76b9ed"></div>
<svg style="position:absolute;left:77px;top:1048px" width="24" height="24" viewBox="0 0 24 24"><rect x="13" y="6.5" width="10" height="10.5" fill="#fff"/><path d="M13 7 L18 12 L23 7" fill="none" stroke="#0a6ed0" stroke-width="1.2"/><path d="M1 4.5 L14 1.5 V23 L1 20.5 Z" fill="#0a6ed0"/><ellipse cx="7" cy="12" rx="3" ry="3.8" fill="none" stroke="#fff" stroke-width="1.9"/></svg>
<div style="left:114px;top:1040px;width:48px;height:40px;background:#2d2d2d"></div>
<div style="left:114px;top:1078px;width:48px;height:2px;background:#76b9ed"></div>
<svg style="position:absolute;left:126px;top:1050px" width="25" height="20" viewBox="0 0 25 20"><rect x="0.5" y="0.5" width="24" height="19" rx="4" fill="#1b93d0"/><rect x="0.5" y="0.5" width="6" height="19" rx="3" fill="#1474ad"/><rect x="6.3" y="2.8" width="16.2" height="14.4" rx="1.5" fill="#fff"/><path d="M9.8 2.8 L14.5 2.8 Q17.5 6.8 20 10 Q17.5 13.2 14.5 17.2 L9.8 17.2 Q13.5 13.2 14.8 10 Q13.5 6.8 9.8 2.8 Z" fill="#1b93d0"/></svg>
<div style="left:1475px;top:1052px;width:1px;height:16px;background:#555"></div>
<div style="left:1478px;top:1052px;width:1px;height:16px;background:#555"></div>
<div class="t" style="left:1489px;top:1053.84px;font-size:12px;line-height:12px;color:#dcdcdc;letter-spacing:-0.3px">Desktop</div>
<svg style="position:absolute;left:1539px;top:1046px" width="12" height="8"><path d="M1 1 L4 4 L1 7 M6 1 L9 4 L6 7" fill="none" stroke="#eee" stroke-width="1.3"/></svg>
<svg style="position:absolute;left:1557px;top:1053px" width="16" height="12"><path d="M2 9 L8 3 L14 9" fill="none" stroke="#e0e0e0" stroke-width="1.4"/></svg>
<svg style="position:absolute;left:1580px;top:1053px" width="19" height="16" viewBox="0 0 19 16"><rect x="3.5" y="1.5" width="14" height="9" fill="none" stroke="#e0e0e0"/><rect x="1" y="3" width="4" height="4" fill="#121212" stroke="#e0e0e0" stroke-width="0.8"/><path d="M10.5 10.5 V14 M6 14.5 H15" stroke="#e0e0e0"/><path d="M2.5 7 V14" stroke="#e0e0e0"/></svg>
<div class="t" style="left:1234px;top:1044.84px;font-size:12px;line-height:12px;width:800px;text-align:center;color:#e8e8e8;letter-spacing:-0.5px">14:23</div>
<div class="t" style="left:1234.5px;top:1062.84px;font-size:12px;line-height:12px;width:800px;text-align:center;color:#e8e8e8;letter-spacing:-0.6px">18.09.2025</div>
<svg style="position:absolute;left:1678px;top:1051px" width="19" height="19" viewBox="0 0 19 19"><path d="M1.5 1.5 H17.5 V13.5 H8 L5 16.5 V13.5 H1.5 Z" fill="#f4f4f4"/><path d="M4 5 H14 M4 8 H14 M4 11 H10" stroke="#121212" stroke-width="1.1"/><circle cx="14" cy="15" r="3" fill="#121212" stroke="#f4f4f4"/></svg>
<div style="left:1715px;top:1040px;width:1px;height:40px;background:#6a6a6a"></div></body></html>
